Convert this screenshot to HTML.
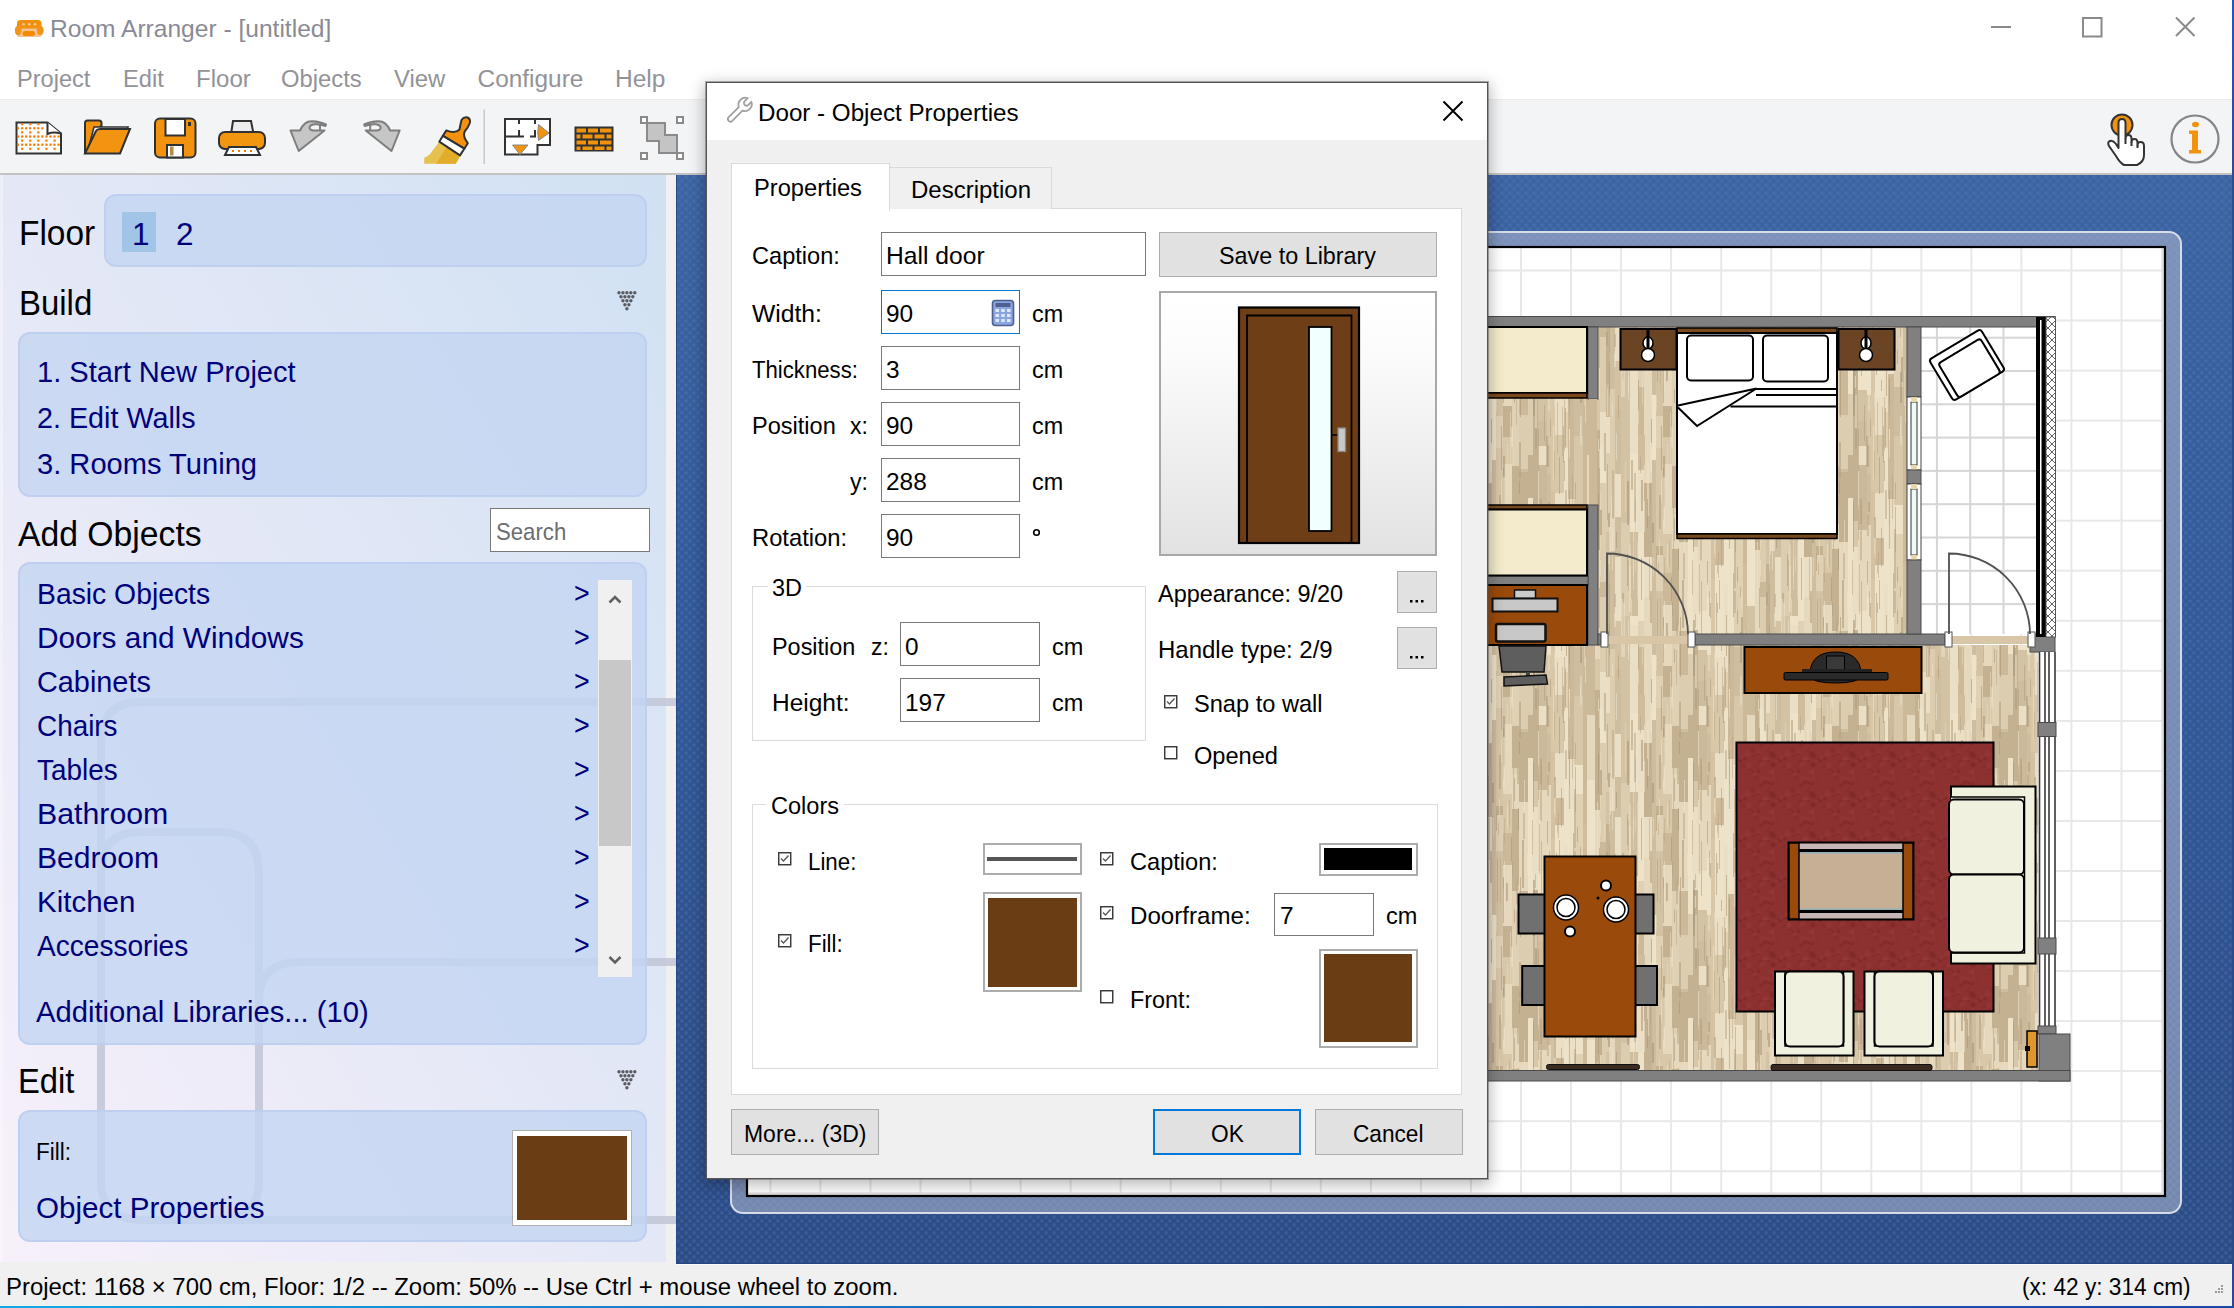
<!DOCTYPE html>
<html><head><meta charset="utf-8"><title>Room Arranger</title>
<style>
html,body{margin:0;padding:0;}
body{width:2234px;height:1308px;overflow:hidden;position:relative;background:#fff;font-family:"Liberation Sans",sans-serif;}
.t{position:absolute;white-space:nowrap;font-family:"Liberation Sans",sans-serif;}
svg{position:absolute;overflow:visible;}
</style></head><body>
<div style="position:absolute;left:0.0px;top:0.0px;width:2234.0px;height:99.0px;background:#fff"></div>
<div style="position:absolute;left:0.0px;top:99.0px;width:2234.0px;height:1.0px;background:#ececec"></div>
<div style="position:absolute;left:0.0px;top:100.0px;width:2232.0px;height:73.0px;background:#f3f4f6"></div>
<div style="position:absolute;left:0.0px;top:173.0px;width:2232.0px;height:2.0px;background:#c3c3c3"></div>
<div style="position:absolute;left:0.0px;top:1262.0px;width:2232.0px;height:44.0px;background:#f0f0f0"></div>
<div style="position:absolute;left:676.0px;top:1264.0px;width:1556.0px;height:1.0px;background:#fafafa"></div>
<div style="position:absolute;left:2232.0px;top:0.0px;width:2.0px;height:1308.0px;background:linear-gradient(#1f56c8 0%,#2c4d90 12%,#2a4a88 100%)"></div>
<div style="position:absolute;left:0.0px;top:1306.0px;width:2234.0px;height:2.0px;background:linear-gradient(90deg,#10a8ea,#1b6fc8 40%,#1848a8 100%)"></div>
<svg style="left:0;top:0" width="50" height="45" viewBox="0 0 50 45">
<rect x="17" y="26" width="24.5" height="11" rx="2" fill="#f7c28f"/>
<rect x="17" y="20" width="24.5" height="8.5" rx="3.5" fill="#f0900c"/>
<circle cx="23.5" cy="24.3" r="1.3" fill="#fcc99a"/><circle cx="29.2" cy="24.3" r="1.3" fill="#fcc99a"/><circle cx="35" cy="24.3" r="1.3" fill="#fcc99a"/>
<ellipse cx="18.2" cy="30.5" rx="3.4" ry="4.8" fill="#f29418"/>
<ellipse cx="40.3" cy="30.5" rx="3.4" ry="4.8" fill="#f29418"/>
<rect x="22.5" y="31" width="12.5" height="5" rx="2.5" fill="#f38a00"/>
</svg>
<div class="t" style="left:50.00px;top:17.00px;font-size:24.40px;line-height:24.40px;transform:scaleX(1.0072);transform-origin:0 0;color:#8a8a94;">Room Arranger - [untitled]</div>
<div class="t" style="left:16.50px;top:67.00px;font-size:24.40px;line-height:24.40px;transform:scaleX(0.9671);transform-origin:0 0;color:#929298;">Project</div>
<div class="t" style="left:123.00px;top:67.00px;font-size:24.40px;line-height:24.40px;transform:scaleX(0.9690);transform-origin:0 0;color:#929298;">Edit</div>
<div class="t" style="left:195.60px;top:67.00px;font-size:24.40px;line-height:24.40px;transform:scaleX(0.9857);transform-origin:0 0;color:#929298;">Floor</div>
<div class="t" style="left:281.00px;top:67.00px;font-size:24.40px;line-height:24.40px;transform:scaleX(0.9759);transform-origin:0 0;color:#929298;">Objects</div>
<div class="t" style="left:393.80px;top:67.00px;font-size:24.40px;line-height:24.40px;transform:scaleX(0.9792);transform-origin:0 0;color:#929298;">View</div>
<div class="t" style="left:477.60px;top:67.00px;font-size:24.40px;line-height:24.40px;color:#929298;">Configure</div>
<div class="t" style="left:615.20px;top:67.00px;font-size:24.40px;line-height:24.40px;transform:scaleX(1.0060);transform-origin:0 0;color:#929298;">Help</div>
<svg style="left:1985px;top:10px" width="220" height="34" viewBox="0 0 220 34">
<rect x="6" y="16" width="20" height="2" fill="#8a8a8a"/>
<rect x="98" y="8" width="18.5" height="18.5" fill="none" stroke="#8a8a8a" stroke-width="2"/>
<path d="M191 7.5 L209.5 26 M209.5 7.5 L191 26" stroke="#8a8a8a" stroke-width="2"/>
</svg>
<svg style="left:0;top:0" width="700" height="175" viewBox="0 0 700 175">
<path d="M16.5 122.5 H47.5 L61 133.5 V153.5 H16.5 Z" fill="#fff" stroke="#333" stroke-width="2"/>
<g fill="#f07c00"><rect x="21.1" y="123.1" width="2.2" height="2.2"/><rect x="29.2" y="123.1" width="2.2" height="2.2"/><rect x="37.3" y="123.1" width="2.2" height="2.2"/><rect x="17.0" y="127.2" width="2.2" height="2.2"/><rect x="21.1" y="127.2" width="2.2" height="2.2"/><rect x="25.1" y="127.2" width="2.2" height="2.2"/><rect x="29.1" y="127.2" width="2.2" height="2.2"/><rect x="33.2" y="127.2" width="2.2" height="2.2"/><rect x="37.2" y="127.2" width="2.2" height="2.2"/><rect x="41.3" y="127.2" width="2.2" height="2.2"/><rect x="21.1" y="131.3" width="2.2" height="2.2"/><rect x="29.2" y="131.3" width="2.2" height="2.2"/><rect x="37.3" y="131.3" width="2.2" height="2.2"/><rect x="17.0" y="135.4" width="2.2" height="2.2"/><rect x="21.1" y="135.4" width="2.2" height="2.2"/><rect x="25.1" y="135.4" width="2.2" height="2.2"/><rect x="29.1" y="135.4" width="2.2" height="2.2"/><rect x="33.2" y="135.4" width="2.2" height="2.2"/><rect x="37.2" y="135.4" width="2.2" height="2.2"/><rect x="41.3" y="135.4" width="2.2" height="2.2"/><rect x="45.4" y="135.4" width="2.2" height="2.2"/><rect x="49.4" y="135.4" width="2.2" height="2.2"/><rect x="53.4" y="135.4" width="2.2" height="2.2"/><rect x="57.5" y="135.4" width="2.2" height="2.2"/><rect x="21.1" y="139.5" width="2.2" height="2.2"/><rect x="29.2" y="139.5" width="2.2" height="2.2"/><rect x="37.3" y="139.5" width="2.2" height="2.2"/><rect x="45.4" y="139.5" width="2.2" height="2.2"/><rect x="53.5" y="139.5" width="2.2" height="2.2"/><rect x="17.0" y="143.6" width="2.2" height="2.2"/><rect x="21.1" y="143.6" width="2.2" height="2.2"/><rect x="25.1" y="143.6" width="2.2" height="2.2"/><rect x="29.1" y="143.6" width="2.2" height="2.2"/><rect x="33.2" y="143.6" width="2.2" height="2.2"/><rect x="37.2" y="143.6" width="2.2" height="2.2"/><rect x="41.3" y="143.6" width="2.2" height="2.2"/><rect x="45.4" y="143.6" width="2.2" height="2.2"/><rect x="49.4" y="143.6" width="2.2" height="2.2"/><rect x="53.4" y="143.6" width="2.2" height="2.2"/><rect x="57.5" y="143.6" width="2.2" height="2.2"/><rect x="21.1" y="147.7" width="2.2" height="2.2"/><rect x="29.2" y="147.7" width="2.2" height="2.2"/><rect x="37.3" y="147.7" width="2.2" height="2.2"/><rect x="45.4" y="147.7" width="2.2" height="2.2"/><rect x="53.5" y="147.7" width="2.2" height="2.2"/></g>
<path d="M47.5 122.5 V134 Q53 131.5 61 133.5" fill="#fff" stroke="#333" stroke-width="2"/>
<!-- folder -->
<path d="M85 153.5 V123 Q85 120.5 87.5 120.5 H99 Q101.5 120.5 101.5 123 V126 H101 L85 153.5" fill="#f2930e" stroke="#2f3133" stroke-width="2"/>
<path d="M88 150 L94 127 H128 L118 150 Z" fill="#fff" stroke="#2f3133" stroke-width="1.6"/>
<path d="M85 153.5 L96 131 Q97 129 100 129 H130 L120 153.5 Z" fill="#f29411" stroke="#2f3133" stroke-width="2"/>
<!-- save -->
<rect x="155" y="118.5" width="40.5" height="39" rx="5" fill="#f2920f" stroke="#2f3133" stroke-width="2"/>
<rect x="165.5" y="119" width="19.5" height="16.5" fill="#fff" stroke="#2f3133" stroke-width="2"/>
<rect x="188" y="122" width="3" height="4" fill="#2f3133"/>
<rect x="167" y="145" width="16" height="12.5" fill="#fff" stroke="#2f3133" stroke-width="2"/>
<rect x="170" y="146.5" width="3.5" height="9" fill="#b88845"/>
<!-- printer -->
<path d="M230 141 L233 121 H251 L255 141 Z" fill="#ececec" stroke="#2f3133" stroke-width="2"/>
<rect x="219" y="132" width="46" height="17" rx="6" fill="#f2950f" stroke="#2f3133" stroke-width="2"/>
<path d="M225 155 L229 147 H256 L260 155 Z" fill="#fff" stroke="#2f3133" stroke-width="2"/>
<g fill="#f07c00"><rect x="232" y="150" width="2" height="2"/><rect x="238" y="150" width="2" height="2"/><rect x="244" y="150" width="2" height="2"/><rect x="250" y="150" width="2" height="2"/></g>
<!-- undo -->
<g id="undo" fill="#c6c6c6" stroke="#7e7e7e" stroke-width="2" stroke-linejoin="round">
<path d="M290.5 130.5 H300 Q304 121 312 121.2 Q320 121.5 326 124.5 L325.5 126 Q320 124 314.5 124.3 Q309.3 125 309.6 128.2 Q310 130.5 313.5 130.5 H324.5 L298.7 151 Z"/>
<path d="M320 124.5 V130" fill="none"/>
</g>
<!-- redo -->
<g transform="matrix(-1 0 0 1 690.2 0)" fill="#c6c6c6" stroke="#7e7e7e" stroke-width="2" stroke-linejoin="round">
<path d="M290.5 130.5 H300 Q304 121 312 121.2 Q320 121.5 326 124.5 L325.5 126 Q320 124 314.5 124.3 Q309.3 125 309.6 128.2 Q310 130.5 313.5 130.5 H324.5 L298.7 151 Z"/>
<path d="M320 124.5 V130" fill="none"/>
</g>
<!-- brush -->
<path d="M439.3 141.7 L433 150 Q429 156.5 424.2 157.7 V163.7 H455.8 L460.5 155 Z" fill="#e6c150"/>
<path d="M447 146.5 L436 163.7 H455.8 L460.5 155 Z" fill="#e2ad2a"/>
<path d="M446.4 130.4 Q455 134 459.5 129.5 Q460.5 124 461.5 120 Q464 116.5 467.5 117.5 Q470.8 119 469.8 123 Q468.2 127.5 465 131 Q462.8 135 465.5 139.5 L467.8 143.3 L464.3 148.7 L442.9 135.8 Z" fill="#f2920f" stroke="#2f3133" stroke-width="2" stroke-linejoin="round"/>
<path d="M442.9 135.8 L464.3 148.7 L460 155.4 L439.3 141.7 Z" fill="#fff" stroke="#2f3133" stroke-width="2" stroke-linejoin="round"/>
<!-- separator -->
<rect x="483.5" y="109.5" width="1.5" height="54.5" fill="#c8c8c8"/>
<!-- floorplan -->
<path d="M505 119 H550 V145 H537.5 V154.5 H505 Z" fill="#fff" stroke="#333" stroke-width="2"/>
<path d="M505 136.5 H524 M530 136.5 H535 V130 M519 119 V124 M519 130 V136.5 M535 119 V124" fill="none" stroke="#333" stroke-width="2"/>
<path d="M538.5 124.5 L549 133 L538.5 140.5 Q537 133 538.5 124.5 Z" fill="#f2930e" stroke="#888" stroke-width="1"/>
<path d="M512.5 145 H528 L520 154.5 Z" fill="#f2930e" stroke="#888" stroke-width="1"/>
<!-- bricks -->
<rect x="574.5" y="126.5" width="39" height="25" fill="#2f3133"/>
<g fill="#f2930e">
<rect x="576.5" y="128.5" width="9.5" height="4"/><rect x="588" y="128.5" width="10" height="4"/><rect x="600" y="128.5" width="11.5" height="4"/>
<rect x="576.5" y="134.5" width="4" height="4"/><rect x="582.5" y="134.5" width="10" height="4"/><rect x="594.5" y="134.5" width="10" height="4"/><rect x="606.5" y="134.5" width="5" height="4"/>
<rect x="576.5" y="140.5" width="9.5" height="4"/><rect x="588" y="140.5" width="10" height="4"/><rect x="600" y="140.5" width="11.5" height="4"/>
<rect x="576.5" y="146.5" width="4" height="3.5"/><rect x="582.5" y="146.5" width="10" height="3.5"/><rect x="594.5" y="146.5" width="10" height="3.5"/><rect x="606.5" y="146.5" width="5" height="3.5"/>
</g>
<!-- resize -->
<path d="M647 123 H665 V135 H677 V153 H659 V141 H647 Z" fill="#c4c4c4" stroke="#8a8a8a" stroke-width="2"/>
<g fill="#fff" stroke="#8a8a8a" stroke-width="2">
<rect x="641" y="117" width="6" height="6"/><rect x="677" y="117" width="6" height="6"/>
<rect x="641" y="153" width="6" height="6"/><rect x="677" y="153" width="6" height="6"/></g>
</svg>
<svg style="left:2100px;top:108px" width="130" height="62" viewBox="0 0 130 62">
<circle cx="22" cy="17" r="10.5" fill="#f2930e" stroke="#333" stroke-width="2"/>
<path d="M18.5 40 V15 Q18.5 11 22 11 Q25.5 11 25.5 15 V30 Q25.5 27 28.5 27 Q31.5 27 31.5 31 V34 Q31.5 31 34.5 31 Q37.5 31 37.5 35 V37 Q37.5 34 40.5 34 Q44 34 44 38 V47 Q44 54 37 57 H24 Q20 55 16 48 L9 38 Q7 34 10 33 Q13 32 16 36 Z" fill="#fff" stroke="#333" stroke-width="2" stroke-linejoin="round"/>
<path d="M25.5 30 V36 M31.5 34 V38 M37.5 37 V40" stroke="#333" stroke-width="2"/>
<circle cx="95" cy="31" r="23.5" fill="none" stroke="#858585" stroke-width="2.2"/>
<ellipse cx="95.5" cy="16.5" rx="3.5" ry="2.8" fill="#f2930e"/>
<path d="M89 22.5 H98 V42 H101 V45.5 H89 V42 H92 V26 H89 Z" fill="#f2930e"/>
</svg>
<div class="t" style="left:5.50px;top:1275.00px;font-size:24.40px;line-height:24.40px;transform:scaleX(0.9802);transform-origin:0 0;color:#000;">Project: 1168 × 700 cm, Floor: 1/2 -- Zoom: 50% -- Use Ctrl + mouse wheel to zoom.</div>
<div class="t" style="left:2022.30px;top:1275.00px;font-size:24.40px;line-height:24.40px;transform:scaleX(0.9286);transform-origin:0 0;color:#000;">(x: 42 y: 314 cm)</div>
<svg style="left:2212px;top:1285px" width="14" height="14"><g fill="#9a9a9a">
<rect x="9" y="0" width="2" height="2"/><rect x="6" y="3" width="2" height="2"/><rect x="9" y="3" width="2" height="2"/>
<rect x="3" y="6" width="2" height="2"/><rect x="6" y="6" width="2" height="2"/><rect x="9" y="6" width="2" height="2"/></g></svg>
<div style="position:absolute;left:0.0px;top:175.0px;width:667.0px;height:1087.0px;background:linear-gradient(to bottom left,#d0e1f3 0%,#e4e8f6 50%,#f7f0fa 100%)"></div>
<div style="position:absolute;left:666.0px;top:175.0px;width:10.0px;height:1089.0px;background:#f0f0f0"></div>
<div style="position:absolute;left:0.0px;top:175.0px;width:3.0px;height:1087.0px;background:rgba(255,255,255,0.35)"></div>
<svg style="left:0;top:175px" width="667" height="1087" viewBox="0 175 667 1087">
<g fill="none" stroke="#c3c8d8" stroke-width="8" opacity="0.9">
<path d="M101 1180 V742 Q101 702 141 702 H700"/>
<path d="M101 1180 Q101 1220 141 1220 H700"/>
<path d="M101 872 Q101 832 141 832 H219 Q259 832 259 872 V1180 Q259 1220 219 1220"/>
<path d="M259 1180 V1002 Q259 962 299 962 H700"/>
</g></svg>
<div style="position:absolute;left:104.0px;top:194.0px;width:543.0px;height:73.0px;background:rgba(196,214,242,0.82);border:2px solid rgba(190,206,238,0.9);border-radius:12px;box-sizing:border-box;"></div>
<div style="position:absolute;left:18.0px;top:332.0px;width:629.0px;height:165.0px;background:rgba(196,214,242,0.82);border:2px solid rgba(190,206,238,0.9);border-radius:12px;box-sizing:border-box;"></div>
<div style="position:absolute;left:18.0px;top:562.0px;width:629.0px;height:483.0px;background:rgba(196,214,242,0.82);border:2px solid rgba(190,206,238,0.9);border-radius:12px;box-sizing:border-box;"></div>
<div style="position:absolute;left:18.0px;top:1110.0px;width:629.0px;height:132.0px;background:rgba(196,214,242,0.82);border:2px solid rgba(190,206,238,0.9);border-radius:12px;box-sizing:border-box;"></div>
<div class="t" style="left:19.00px;top:215.00px;font-size:35.20px;line-height:35.20px;transform:scaleX(0.9500);transform-origin:0 0;color:#000;">Floor</div>
<div style="position:absolute;left:122.0px;top:212.0px;width:34.0px;height:40.0px;background:#a2c4e6"></div>
<div class="t" style="left:132.00px;top:219.00px;font-size:31.50px;line-height:31.50px;color:#00007a;">1</div>
<div class="t" style="left:176.00px;top:219.00px;font-size:31.50px;line-height:31.50px;color:#00007a;">2</div>
<div class="t" style="left:19.00px;top:285.00px;font-size:35.20px;line-height:35.20px;transform:scaleX(0.9359);transform-origin:0 0;color:#000;">Build</div>
<svg style="left:617px;top:290px" width="20" height="20" viewBox="0 0 20 20"><g fill="#5a5c62"><circle cx="2.00" cy="2.80" r="1.7"/><circle cx="5.95" cy="2.80" r="1.7"/><circle cx="9.90" cy="2.80" r="1.7"/><circle cx="13.85" cy="2.80" r="1.7"/><circle cx="17.80" cy="2.80" r="1.7"/><circle cx="3.98" cy="6.78" r="1.7"/><circle cx="7.93" cy="6.78" r="1.7"/><circle cx="11.88" cy="6.78" r="1.7"/><circle cx="15.83" cy="6.78" r="1.7"/><circle cx="5.95" cy="10.76" r="1.7"/><circle cx="9.90" cy="10.76" r="1.7"/><circle cx="13.85" cy="10.76" r="1.7"/><circle cx="7.93" cy="14.74" r="1.7"/><circle cx="11.88" cy="14.74" r="1.7"/><circle cx="9.90" cy="18.72" r="1.7"/></g></svg>
<svg style="left:617px;top:1069px" width="20" height="20" viewBox="0 0 20 20"><g fill="#5a5c62"><circle cx="2.00" cy="2.80" r="1.7"/><circle cx="5.95" cy="2.80" r="1.7"/><circle cx="9.90" cy="2.80" r="1.7"/><circle cx="13.85" cy="2.80" r="1.7"/><circle cx="17.80" cy="2.80" r="1.7"/><circle cx="3.98" cy="6.78" r="1.7"/><circle cx="7.93" cy="6.78" r="1.7"/><circle cx="11.88" cy="6.78" r="1.7"/><circle cx="15.83" cy="6.78" r="1.7"/><circle cx="5.95" cy="10.76" r="1.7"/><circle cx="9.90" cy="10.76" r="1.7"/><circle cx="13.85" cy="10.76" r="1.7"/><circle cx="7.93" cy="14.74" r="1.7"/><circle cx="11.88" cy="14.74" r="1.7"/><circle cx="9.90" cy="18.72" r="1.7"/></g></svg>
<div class="t" style="left:36.50px;top:357.00px;font-size:29.60px;line-height:29.60px;transform:scaleX(0.9830);transform-origin:0 0;color:#00007a;">1. Start New Project</div>
<div class="t" style="left:36.50px;top:403.00px;font-size:29.60px;line-height:29.60px;transform:scaleX(0.9706);transform-origin:0 0;color:#00007a;">2. Edit Walls</div>
<div class="t" style="left:36.50px;top:449.00px;font-size:29.60px;line-height:29.60px;transform:scaleX(0.9835);transform-origin:0 0;color:#00007a;">3. Rooms Tuning</div>
<div class="t" style="left:18.00px;top:516.00px;font-size:35.20px;line-height:35.20px;transform:scaleX(0.9583);transform-origin:0 0;color:#000;">Add Objects</div>
<div style="position:absolute;left:490.0px;top:508.0px;width:160.0px;height:44.0px;background:#fff;border:1px solid #7a7a7a;box-sizing:border-box"></div>
<div class="t" style="left:496.00px;top:520.00px;font-size:24.40px;line-height:24.40px;transform:scaleX(0.9091);transform-origin:0 0;color:#6d6d6d;">Search</div>
<div class="t" style="left:36.50px;top:579.00px;font-size:29.60px;line-height:29.60px;transform:scaleX(0.9569);transform-origin:0 0;color:#00007a;">Basic Objects</div>
<div class="t" style="left:574.00px;top:578.00px;font-size:29.60px;line-height:29.60px;transform:scaleX(0.9059);transform-origin:0 0;color:#00007a;">&gt;</div>
<div class="t" style="left:36.50px;top:623.00px;font-size:29.60px;line-height:29.60px;transform:scaleX(1.0075);transform-origin:0 0;color:#00007a;">Doors and Windows</div>
<div class="t" style="left:574.00px;top:622.00px;font-size:29.60px;line-height:29.60px;transform:scaleX(0.9059);transform-origin:0 0;color:#00007a;">&gt;</div>
<div class="t" style="left:36.50px;top:667.00px;font-size:29.60px;line-height:29.60px;transform:scaleX(0.9744);transform-origin:0 0;color:#00007a;">Cabinets</div>
<div class="t" style="left:574.00px;top:666.00px;font-size:29.60px;line-height:29.60px;transform:scaleX(0.9059);transform-origin:0 0;color:#00007a;">&gt;</div>
<div class="t" style="left:36.50px;top:711.00px;font-size:29.60px;line-height:29.60px;transform:scaleX(0.9419);transform-origin:0 0;color:#00007a;">Chairs</div>
<div class="t" style="left:574.00px;top:710.00px;font-size:29.60px;line-height:29.60px;transform:scaleX(0.9059);transform-origin:0 0;color:#00007a;">&gt;</div>
<div class="t" style="left:36.50px;top:755.00px;font-size:29.60px;line-height:29.60px;transform:scaleX(0.9419);transform-origin:0 0;color:#00007a;">Tables</div>
<div class="t" style="left:574.00px;top:754.00px;font-size:29.60px;line-height:29.60px;transform:scaleX(0.9059);transform-origin:0 0;color:#00007a;">&gt;</div>
<div class="t" style="left:36.50px;top:799.00px;font-size:29.60px;line-height:29.60px;transform:scaleX(1.0234);transform-origin:0 0;color:#00007a;">Bathroom</div>
<div class="t" style="left:574.00px;top:798.00px;font-size:29.60px;line-height:29.60px;transform:scaleX(0.9059);transform-origin:0 0;color:#00007a;">&gt;</div>
<div class="t" style="left:36.50px;top:843.00px;font-size:29.60px;line-height:29.60px;transform:scaleX(1.0167);transform-origin:0 0;color:#00007a;">Bedroom</div>
<div class="t" style="left:574.00px;top:842.00px;font-size:29.60px;line-height:29.60px;transform:scaleX(0.9059);transform-origin:0 0;color:#00007a;">&gt;</div>
<div class="t" style="left:36.50px;top:887.00px;font-size:29.60px;line-height:29.60px;transform:scaleX(0.9960);transform-origin:0 0;color:#00007a;">Kitchen</div>
<div class="t" style="left:574.00px;top:886.00px;font-size:29.60px;line-height:29.60px;transform:scaleX(0.9059);transform-origin:0 0;color:#00007a;">&gt;</div>
<div class="t" style="left:36.50px;top:931.00px;font-size:29.60px;line-height:29.60px;transform:scaleX(0.9481);transform-origin:0 0;color:#00007a;">Accessories</div>
<div class="t" style="left:574.00px;top:930.00px;font-size:29.60px;line-height:29.60px;transform:scaleX(0.9059);transform-origin:0 0;color:#00007a;">&gt;</div>
<div style="position:absolute;left:598.0px;top:580.0px;width:34.0px;height:397.0px;background:#f0f0f0"></div>
<div style="position:absolute;left:599.0px;top:660.0px;width:32.0px;height:186.0px;background:#c8c8c8"></div>
<svg style="left:598px;top:580px" width="34" height="397" viewBox="0 0 34 397">
<path d="M11.5 22.5 L17 17 L22.5 22.5" fill="none" stroke="#606060" stroke-width="2.5"/>
<path d="M11.5 377 L17 382.5 L22.5 377" fill="none" stroke="#606060" stroke-width="2.5"/>
</svg>
<div class="t" style="left:36.00px;top:997.00px;font-size:29.60px;line-height:29.60px;transform:scaleX(0.9864);transform-origin:0 0;color:#00007a;">Additional Libraries... (10)</div>
<div class="t" style="left:18.30px;top:1063.00px;font-size:35.20px;line-height:35.20px;transform:scaleX(0.9295);transform-origin:0 0;color:#000;">Edit</div>
<div class="t" style="left:36.00px;top:1140.00px;font-size:24.40px;line-height:24.40px;transform:scaleX(0.9211);transform-origin:0 0;color:#000;">Fill:</div>
<div class="t" style="left:36.00px;top:1193.00px;font-size:29.60px;line-height:29.60px;color:#00007a;">Object Properties</div>
<div style="position:absolute;left:512.0px;top:1130.0px;width:120.0px;height:96.0px;background:#fff;border:1px solid #b0b0b0;box-sizing:border-box"></div>
<div style="position:absolute;left:517.0px;top:1136.0px;width:110.0px;height:84.0px;background:#6b3d15"></div>
<div style="position:absolute;left:676.0px;top:175.0px;width:1556.0px;height:1089.0px;background-color:#30558f;background-image:radial-gradient(circle at 2px 2px, rgba(100,140,200,0.32) 0, rgba(100,140,200,0.14) 2px, transparent 3px),radial-gradient(circle at 6px 6px, rgba(100,140,200,0.32) 0, rgba(100,140,200,0.14) 2px, transparent 3px),linear-gradient(#3b63a1 0%,#33599a 35%,#2a4b84 100%);background-size:8px 8px,8px 8px,100% 100%;background-position:0 0"></div>
<div style="position:absolute;left:676.0px;top:1263.0px;width:1556.0px;height:1.0px;background:#24457f"></div>
<div style="position:absolute;left:676.0px;top:175.0px;width:1.0px;height:1089.0px;background:#26488a"></div>
<div style="position:absolute;left:730.0px;top:230.5px;width:1451.5px;height:983.5px;background:rgba(178,186,208,0.55);border:2px solid #d5dce8;border-radius:13px;box-sizing:border-box"></div>
<svg style="left:0;top:0" width="2234" height="1308" viewBox="0 0 2234 1308">
<rect x="746" y="246" width="1420" height="951" fill="#fff"/>
<g fill="#e8e8e8"><rect x="769.4" y="247" width="2" height="949"/><rect x="819.4" y="247" width="2" height="949"/><rect x="869.5" y="247" width="2" height="949"/><rect x="919.5" y="247" width="2" height="949"/><rect x="969.6" y="247" width="2" height="949"/><rect x="1019.6" y="247" width="2" height="949"/><rect x="1069.6" y="247" width="2" height="949"/><rect x="1119.7" y="247" width="2" height="949"/><rect x="1169.7" y="247" width="2" height="949"/><rect x="1219.8" y="247" width="2" height="949"/><rect x="1269.8" y="247" width="2" height="949"/><rect x="1319.8" y="247" width="2" height="949"/><rect x="1369.9" y="247" width="2" height="949"/><rect x="1419.9" y="247" width="2" height="949"/><rect x="1470.0" y="247" width="2" height="949"/><rect x="1520.0" y="247" width="2" height="949"/><rect x="1570.0" y="247" width="2" height="949"/><rect x="1620.1" y="247" width="2" height="949"/><rect x="1670.1" y="247" width="2" height="949"/><rect x="1720.2" y="247" width="2" height="949"/><rect x="1770.2" y="247" width="2" height="949"/><rect x="1820.2" y="247" width="2" height="949"/><rect x="1870.3" y="247" width="2" height="949"/><rect x="1920.3" y="247" width="2" height="949"/><rect x="1970.4" y="247" width="2" height="949"/><rect x="2020.4" y="247" width="2" height="949"/><rect x="2070.4" y="247" width="2" height="949"/><rect x="2120.5" y="247" width="2" height="949"/><rect x="747" y="269.5" width="1418" height="2"/><rect x="747" y="319.5" width="1418" height="2"/><rect x="747" y="369.6" width="1418" height="2"/><rect x="747" y="419.6" width="1418" height="2"/><rect x="747" y="469.7" width="1418" height="2"/><rect x="747" y="519.7" width="1418" height="2"/><rect x="747" y="569.7" width="1418" height="2"/><rect x="747" y="619.8" width="1418" height="2"/><rect x="747" y="669.8" width="1418" height="2"/><rect x="747" y="719.9" width="1418" height="2"/><rect x="747" y="769.9" width="1418" height="2"/><rect x="747" y="819.9" width="1418" height="2"/><rect x="747" y="870.0" width="1418" height="2"/><rect x="747" y="920.0" width="1418" height="2"/><rect x="747" y="970.1" width="1418" height="2"/><rect x="747" y="1020.1" width="1418" height="2"/><rect x="747" y="1070.1" width="1418" height="2"/><rect x="747" y="1120.2" width="1418" height="2"/><rect x="747" y="1170.2" width="1418" height="2"/></g>
<rect x="2161.5" y="248" width="3" height="947" fill="#dcdcdc"/><rect x="748" y="1192.5" width="1416" height="3" fill="#dcdcdc"/>
<rect x="747" y="247" width="1418" height="949" fill="none" stroke="#000" stroke-width="2.2"/>
<defs><pattern id="wood" patternUnits="userSpaceOnUse" x="0" y="0" width="160" height="260"><rect width="160" height="260" fill="#d9c9ab"/><rect x="0" y="77" width="6" height="75" fill="#ddcdb0"/><rect x="0" y="152" width="6" height="34" fill="#eadec4"/><rect x="0" y="186" width="6" height="37" fill="#eee2c9"/><rect x="0" y="223" width="6" height="37" fill="#ddcdb0"/><rect x="0" y="0" width="6" height="62" fill="#ddcdb0"/><rect x="0" y="62" width="6" height="15" fill="#cbb99a"/><rect x="6" y="44" width="4" height="80" fill="#c4b192"/><rect x="6" y="124" width="4" height="33" fill="#cbb99a"/><rect x="6" y="157" width="4" height="36" fill="#eadec4"/><rect x="6" y="193" width="4" height="67" fill="#ddcdb0"/><rect x="6" y="0" width="4" height="12" fill="#ddcdb0"/><rect x="6" y="12" width="4" height="32" fill="#d3c2a4"/><rect x="10" y="31" width="5" height="98" fill="#cfbd9f"/><rect x="10" y="129" width="5" height="75" fill="#ddcdb0"/><rect x="10" y="204" width="5" height="53" fill="#ddcdb0"/><rect x="10" y="257" width="5" height="3" fill="#e6d8bd"/><rect x="10" y="0" width="5" height="31" fill="#e6d8bd"/><rect x="15" y="214" width="6" height="43" fill="#eadec4"/><rect x="15" y="257" width="6" height="3" fill="#cfbd9f"/><rect x="15" y="0" width="6" height="37" fill="#cfbd9f"/><rect x="15" y="37" width="6" height="64" fill="#eadec4"/><rect x="15" y="101" width="6" height="48" fill="#d3c2a4"/><rect x="15" y="149" width="6" height="65" fill="#cfbd9f"/><rect x="21" y="96" width="9" height="72" fill="#d3c2a4"/><rect x="21" y="168" width="9" height="92" fill="#d3c2a4"/><rect x="21" y="0" width="9" height="3" fill="#d3c2a4"/><rect x="21" y="3" width="9" height="93" fill="#ddcdb0"/><rect x="30" y="105" width="8" height="88" fill="#eadec4"/><rect x="30" y="193" width="8" height="67" fill="#eee2c9"/><rect x="30" y="0" width="8" height="12" fill="#eee2c9"/><rect x="30" y="12" width="8" height="84" fill="#cfbd9f"/><rect x="30" y="96" width="8" height="9" fill="#eee2c9"/><rect x="38" y="127" width="6" height="48" fill="#cbb99a"/><rect x="38" y="175" width="6" height="35" fill="#cfbd9f"/><rect x="38" y="210" width="6" height="50" fill="#eadec4"/><rect x="38" y="0" width="6" height="13" fill="#eadec4"/><rect x="38" y="13" width="6" height="88" fill="#eee2c9"/><rect x="38" y="101" width="6" height="26" fill="#e0d1b5"/><rect x="44" y="37" width="8" height="40" fill="#eadec4"/><rect x="44" y="77" width="8" height="78" fill="#e6d8bd"/><rect x="44" y="155" width="8" height="68" fill="#e6d8bd"/><rect x="44" y="223" width="8" height="37" fill="#c4b192"/><rect x="44" y="0" width="8" height="37" fill="#c4b192"/><rect x="52" y="39" width="4" height="96" fill="#cfbd9f"/><rect x="52" y="135" width="4" height="65" fill="#eee2c9"/><rect x="52" y="200" width="4" height="60" fill="#cfbd9f"/><rect x="52" y="0" width="4" height="9" fill="#cfbd9f"/><rect x="52" y="9" width="4" height="30" fill="#cfbd9f"/><rect x="56" y="35" width="7" height="36" fill="#e0d1b5"/><rect x="56" y="71" width="7" height="85" fill="#d3c2a4"/><rect x="56" y="156" width="7" height="32" fill="#e0d1b5"/><rect x="56" y="188" width="7" height="72" fill="#d8c7a9"/><rect x="56" y="0" width="7" height="26" fill="#d8c7a9"/><rect x="56" y="26" width="7" height="9" fill="#c4b192"/><rect x="63" y="177" width="9" height="27" fill="#d8c7a9"/><rect x="63" y="204" width="9" height="56" fill="#e6d8bd"/><rect x="63" y="0" width="9" height="14" fill="#e6d8bd"/><rect x="63" y="14" width="9" height="39" fill="#d8c7a9"/><rect x="63" y="53" width="9" height="32" fill="#cbb99a"/><rect x="63" y="85" width="9" height="61" fill="#e6d8bd"/><rect x="63" y="146" width="9" height="31" fill="#c4b192"/><rect x="72" y="254" width="7" height="6" fill="#e6d8bd"/><rect x="72" y="0" width="7" height="29" fill="#e6d8bd"/><rect x="72" y="29" width="7" height="82" fill="#c4b192"/><rect x="72" y="111" width="7" height="95" fill="#e0d1b5"/><rect x="72" y="206" width="7" height="42" fill="#c4b192"/><rect x="72" y="248" width="7" height="6" fill="#e0d1b5"/><rect x="79" y="212" width="9" height="48" fill="#c4b192"/><rect x="79" y="0" width="9" height="22" fill="#c4b192"/><rect x="79" y="22" width="9" height="54" fill="#e6d8bd"/><rect x="79" y="76" width="9" height="35" fill="#e6d8bd"/><rect x="79" y="111" width="9" height="44" fill="#cbb99a"/><rect x="79" y="155" width="9" height="54" fill="#ddcdb0"/><rect x="79" y="209" width="9" height="3" fill="#cfbd9f"/><rect x="88" y="134" width="5" height="61" fill="#ddcdb0"/><rect x="88" y="195" width="5" height="43" fill="#c4b192"/><rect x="88" y="238" width="5" height="22" fill="#eee2c9"/><rect x="88" y="0" width="5" height="71" fill="#eee2c9"/><rect x="88" y="71" width="5" height="63" fill="#eee2c9"/><rect x="93" y="27" width="5" height="83" fill="#eadec4"/><rect x="93" y="110" width="5" height="75" fill="#c4b192"/><rect x="93" y="185" width="5" height="75" fill="#c4b192"/><rect x="93" y="0" width="5" height="1" fill="#c4b192"/><rect x="93" y="1" width="5" height="26" fill="#d8c7a9"/><rect x="98" y="205" width="9" height="32" fill="#cbb99a"/><rect x="98" y="237" width="9" height="23" fill="#cbb99a"/><rect x="98" y="0" width="9" height="10" fill="#cbb99a"/><rect x="98" y="10" width="9" height="81" fill="#e6d8bd"/><rect x="98" y="91" width="9" height="39" fill="#eee2c9"/><rect x="98" y="130" width="9" height="31" fill="#d3c2a4"/><rect x="98" y="161" width="9" height="25" fill="#cfbd9f"/><rect x="98" y="186" width="9" height="19" fill="#eadec4"/><rect x="107" y="186" width="4" height="28" fill="#d3c2a4"/><rect x="107" y="214" width="4" height="46" fill="#cfbd9f"/><rect x="107" y="0" width="4" height="5" fill="#cfbd9f"/><rect x="107" y="5" width="4" height="73" fill="#e6d8bd"/><rect x="107" y="78" width="4" height="57" fill="#eee2c9"/><rect x="107" y="135" width="4" height="51" fill="#d8c7a9"/><rect x="111" y="59" width="4" height="87" fill="#d8c7a9"/><rect x="111" y="146" width="4" height="86" fill="#d8c7a9"/><rect x="111" y="232" width="4" height="28" fill="#d3c2a4"/><rect x="111" y="0" width="4" height="36" fill="#d3c2a4"/><rect x="111" y="36" width="4" height="23" fill="#d3c2a4"/><rect x="115" y="175" width="9" height="58" fill="#d8c7a9"/><rect x="115" y="233" width="9" height="27" fill="#eadec4"/><rect x="115" y="0" width="9" height="18" fill="#eadec4"/><rect x="115" y="18" width="9" height="27" fill="#cbb99a"/><rect x="115" y="45" width="9" height="92" fill="#eee2c9"/><rect x="115" y="137" width="9" height="38" fill="#eadec4"/><rect x="124" y="152" width="4" height="36" fill="#e0d1b5"/><rect x="124" y="188" width="4" height="72" fill="#eee2c9"/><rect x="124" y="0" width="4" height="19" fill="#eee2c9"/><rect x="124" y="19" width="4" height="46" fill="#eee2c9"/><rect x="124" y="65" width="4" height="53" fill="#eadec4"/><rect x="124" y="118" width="4" height="34" fill="#eadec4"/><rect x="128" y="114" width="6" height="49" fill="#cbb99a"/><rect x="128" y="163" width="6" height="76" fill="#cbb99a"/><rect x="128" y="239" width="6" height="21" fill="#eadec4"/><rect x="128" y="0" width="6" height="29" fill="#eadec4"/><rect x="128" y="29" width="6" height="85" fill="#eee2c9"/><rect x="134" y="14" width="9" height="28" fill="#e0d1b5"/><rect x="134" y="42" width="9" height="85" fill="#e0d1b5"/><rect x="134" y="127" width="9" height="49" fill="#cfbd9f"/><rect x="134" y="176" width="9" height="69" fill="#d8c7a9"/><rect x="134" y="245" width="9" height="15" fill="#eee2c9"/><rect x="134" y="0" width="9" height="14" fill="#eee2c9"/><rect x="143" y="112" width="4" height="38" fill="#cbb99a"/><rect x="143" y="150" width="4" height="85" fill="#cbb99a"/><rect x="143" y="235" width="4" height="25" fill="#cbb99a"/><rect x="143" y="0" width="4" height="43" fill="#cbb99a"/><rect x="143" y="43" width="4" height="69" fill="#cfbd9f"/><rect x="147" y="0" width="8" height="86" fill="#eee2c9"/><rect x="147" y="86" width="8" height="35" fill="#d3c2a4"/><rect x="147" y="121" width="8" height="74" fill="#cbb99a"/><rect x="147" y="195" width="8" height="65" fill="#e6d8bd"/><rect x="155" y="170" width="5" height="36" fill="#c4b192"/><rect x="155" y="206" width="5" height="54" fill="#c4b192"/><rect x="155" y="0" width="5" height="30" fill="#c4b192"/><rect x="155" y="30" width="5" height="35" fill="#e6d8bd"/><rect x="155" y="65" width="5" height="46" fill="#e6d8bd"/><rect x="155" y="111" width="5" height="28" fill="#e6d8bd"/><rect x="155" y="139" width="5" height="31" fill="#d8c7a9"/><rect x="37" y="242" width="1" height="19" fill="#e9dcc1" opacity="0.55"/><rect x="37" y="-18" width="1" height="19" fill="#e9dcc1" opacity="0.55"/><rect x="140" y="67" width="1" height="10" fill="#b09c7c" opacity="0.55"/><rect x="134" y="71" width="2" height="22" fill="#bca888" opacity="0.55"/><rect x="7" y="128" width="1" height="28" fill="#e9dcc1" opacity="0.55"/><rect x="61" y="166" width="1" height="44" fill="#a89474" opacity="0.55"/><rect x="33" y="31" width="1" height="39" fill="#e9dcc1" opacity="0.55"/><rect x="132" y="215" width="1" height="44" fill="#bca888" opacity="0.55"/><rect x="134" y="9" width="2" height="59" fill="#bca888" opacity="0.55"/><rect x="155" y="2" width="1" height="21" fill="#bca888" opacity="0.55"/><rect x="121" y="61" width="1" height="30" fill="#e9dcc1" opacity="0.55"/><rect x="135" y="247" width="1" height="45" fill="#b09c7c" opacity="0.55"/><rect x="135" y="-13" width="1" height="45" fill="#b09c7c" opacity="0.55"/><rect x="63" y="97" width="1" height="12" fill="#b09c7c" opacity="0.55"/><rect x="129" y="231" width="1" height="58" fill="#b09c7c" opacity="0.55"/><rect x="129" y="-29" width="1" height="58" fill="#b09c7c" opacity="0.55"/><rect x="113" y="166" width="1" height="54" fill="#efe3ca" opacity="0.55"/><rect x="115" y="244" width="1" height="54" fill="#e9dcc1" opacity="0.55"/><rect x="115" y="-16" width="1" height="54" fill="#e9dcc1" opacity="0.55"/><rect x="66" y="103" width="2" height="18" fill="#a89474" opacity="0.55"/><rect x="31" y="200" width="2" height="30" fill="#b09c7c" opacity="0.55"/><rect x="61" y="219" width="1" height="23" fill="#efe3ca" opacity="0.55"/><rect x="31" y="79" width="1" height="19" fill="#efe3ca" opacity="0.55"/><rect x="35" y="239" width="1" height="57" fill="#b09c7c" opacity="0.55"/><rect x="35" y="-21" width="1" height="57" fill="#b09c7c" opacity="0.55"/><rect x="101" y="249" width="1" height="52" fill="#bca888" opacity="0.55"/><rect x="101" y="-11" width="1" height="52" fill="#bca888" opacity="0.55"/><rect x="41" y="220" width="2" height="31" fill="#a89474" opacity="0.55"/><rect x="50" y="182" width="1" height="15" fill="#efe3ca" opacity="0.55"/><rect x="4" y="173" width="2" height="38" fill="#b09c7c" opacity="0.55"/><rect x="98" y="169" width="1" height="42" fill="#b09c7c" opacity="0.55"/><rect x="28" y="117" width="1" height="15" fill="#efe3ca" opacity="0.55"/><rect x="69" y="20" width="1" height="27" fill="#bca888" opacity="0.55"/><rect x="108" y="132" width="2" height="19" fill="#e9dcc1" opacity="0.55"/><rect x="131" y="253" width="1" height="15" fill="#efe3ca" opacity="0.55"/><rect x="131" y="-7" width="1" height="15" fill="#efe3ca" opacity="0.55"/><rect x="14" y="93" width="2" height="14" fill="#efe3ca" opacity="0.55"/><rect x="4" y="45" width="1" height="15" fill="#e9dcc1" opacity="0.55"/><rect x="56" y="34" width="1" height="17" fill="#a89474" opacity="0.55"/><rect x="2" y="173" width="2" height="27" fill="#e9dcc1" opacity="0.55"/><rect x="33" y="22" width="1" height="17" fill="#bca888" opacity="0.55"/><rect x="67" y="25" width="1" height="22" fill="#efe3ca" opacity="0.55"/><rect x="78" y="105" width="1" height="38" fill="#e9dcc1" opacity="0.55"/><rect x="45" y="138" width="1" height="11" fill="#efe3ca" opacity="0.55"/><rect x="9" y="7" width="1" height="56" fill="#e9dcc1" opacity="0.55"/><rect x="141" y="97" width="2" height="25" fill="#a89474" opacity="0.55"/><rect x="27" y="221" width="2" height="44" fill="#a89474" opacity="0.55"/><rect x="27" y="-39" width="2" height="44" fill="#a89474" opacity="0.55"/><rect x="129" y="157" width="1" height="24" fill="#efe3ca" opacity="0.55"/><rect x="50" y="71" width="2" height="32" fill="#b09c7c" opacity="0.55"/><rect x="33" y="7" width="1" height="50" fill="#efe3ca" opacity="0.55"/><rect x="110" y="83" width="1" height="15" fill="#a89474" opacity="0.55"/><rect x="129" y="144" width="1" height="54" fill="#efe3ca" opacity="0.55"/><rect x="11" y="235" width="1" height="20" fill="#efe3ca" opacity="0.55"/><rect x="114" y="1" width="1" height="33" fill="#efe3ca" opacity="0.55"/><rect x="140" y="165" width="1" height="12" fill="#efe3ca" opacity="0.55"/><rect x="55" y="182" width="1" height="10" fill="#efe3ca" opacity="0.55"/><rect x="97" y="42" width="2" height="27" fill="#e9dcc1" opacity="0.55"/><rect x="51" y="127" width="1" height="15" fill="#efe3ca" opacity="0.55"/><rect x="22" y="73" width="2" height="47" fill="#b09c7c" opacity="0.55"/><rect x="100" y="11" width="1" height="29" fill="#bca888" opacity="0.55"/><rect x="21" y="79" width="2" height="58" fill="#efe3ca" opacity="0.55"/><rect x="126" y="76" width="1" height="56" fill="#e9dcc1" opacity="0.55"/><rect x="37" y="22" width="2" height="56" fill="#e9dcc1" opacity="0.55"/><rect x="35" y="258" width="1" height="53" fill="#e9dcc1" opacity="0.55"/><rect x="35" y="-2" width="1" height="53" fill="#e9dcc1" opacity="0.55"/><rect x="58" y="43" width="1" height="12" fill="#bca888" opacity="0.55"/><rect x="92" y="53" width="2" height="38" fill="#e9dcc1" opacity="0.55"/><rect x="12" y="9" width="1" height="41" fill="#efe3ca" opacity="0.55"/><rect x="0" y="233" width="1" height="57" fill="#e9dcc1" opacity="0.55"/><rect x="0" y="-27" width="1" height="57" fill="#e9dcc1" opacity="0.55"/><rect x="137" y="47" width="1" height="57" fill="#a89474" opacity="0.55"/><rect x="64" y="38" width="1" height="25" fill="#bca888" opacity="0.55"/><rect x="59" y="235" width="2" height="34" fill="#b09c7c" opacity="0.55"/><rect x="59" y="-25" width="2" height="34" fill="#b09c7c" opacity="0.55"/><rect x="122" y="147" width="1" height="49" fill="#bca888" opacity="0.55"/><rect x="19" y="75" width="1" height="26" fill="#efe3ca" opacity="0.55"/><rect x="159" y="68" width="1" height="40" fill="#b09c7c" opacity="0.55"/><rect x="124" y="137" width="1" height="54" fill="#bca888" opacity="0.55"/><rect x="125" y="148" width="1" height="39" fill="#a89474" opacity="0.55"/><rect x="119" y="60" width="1" height="29" fill="#b09c7c" opacity="0.55"/><rect x="121" y="8" width="1" height="39" fill="#b09c7c" opacity="0.55"/><rect x="129" y="230" width="1" height="34" fill="#bca888" opacity="0.55"/><rect x="129" y="-30" width="1" height="34" fill="#bca888" opacity="0.55"/><rect x="53" y="38" width="1" height="19" fill="#e9dcc1" opacity="0.55"/><rect x="67" y="184" width="1" height="48" fill="#e9dcc1" opacity="0.55"/><rect x="71" y="57" width="1" height="24" fill="#a89474" opacity="0.55"/><rect x="124" y="201" width="1" height="20" fill="#b09c7c" opacity="0.55"/><rect x="125" y="230" width="2" height="29" fill="#bca888" opacity="0.55"/><rect x="106" y="176" width="2" height="30" fill="#b09c7c" opacity="0.55"/><rect x="84" y="0" width="1" height="58" fill="#efe3ca" opacity="0.55"/><rect x="101" y="61" width="1" height="55" fill="#b09c7c" opacity="0.55"/><rect x="74" y="129" width="1" height="14" fill="#a89474" opacity="0.55"/><rect x="99" y="39" width="1" height="37" fill="#efe3ca" opacity="0.55"/><rect x="12" y="143" width="1" height="13" fill="#efe3ca" opacity="0.55"/><rect x="38" y="127" width="1" height="37" fill="#e9dcc1" opacity="0.55"/><rect x="80" y="97" width="1" height="60" fill="#a89474" opacity="0.55"/><rect x="7" y="204" width="1" height="56" fill="#b09c7c" opacity="0.55"/><rect x="12" y="210" width="2" height="49" fill="#bca888" opacity="0.55"/><rect x="73" y="248" width="1" height="45" fill="#bca888" opacity="0.55"/><rect x="73" y="-12" width="1" height="45" fill="#bca888" opacity="0.55"/><rect x="43" y="241" width="2" height="31" fill="#efe3ca" opacity="0.55"/><rect x="43" y="-19" width="2" height="31" fill="#efe3ca" opacity="0.55"/><rect x="76" y="130" width="1" height="35" fill="#bca888" opacity="0.55"/><rect x="77" y="247" width="2" height="17" fill="#bca888" opacity="0.55"/><rect x="77" y="-13" width="2" height="17" fill="#bca888" opacity="0.55"/><rect x="41" y="38" width="1" height="42" fill="#a89474" opacity="0.55"/><rect x="140" y="112" width="2" height="31" fill="#a89474" opacity="0.55"/><rect x="109" y="71" width="1" height="25" fill="#b09c7c" opacity="0.55"/><rect x="44" y="175" width="1" height="30" fill="#bca888" opacity="0.55"/><rect x="94" y="132" width="1" height="11" fill="#a89474" opacity="0.55"/><rect x="98" y="211" width="1" height="34" fill="#efe3ca" opacity="0.55"/><rect x="86" y="31" width="2" height="27" fill="#e9dcc1" opacity="0.55"/><rect x="92" y="64" width="1" height="15" fill="#efe3ca" opacity="0.55"/><rect x="63" y="196" width="2" height="51" fill="#a89474" opacity="0.55"/><rect x="110" y="159" width="1" height="18" fill="#b09c7c" opacity="0.55"/><rect x="108" y="242" width="2" height="10" fill="#b09c7c" opacity="0.55"/><rect x="100" y="239" width="2" height="25" fill="#b09c7c" opacity="0.55"/><rect x="100" y="-21" width="2" height="25" fill="#b09c7c" opacity="0.55"/><rect x="57" y="79" width="1" height="43" fill="#b09c7c" opacity="0.55"/><rect x="117" y="43" width="1" height="10" fill="#bca888" opacity="0.55"/><rect x="59" y="19" width="1" height="18" fill="#efe3ca" opacity="0.55"/><rect x="135" y="223" width="1" height="16" fill="#b09c7c" opacity="0.55"/><rect x="76" y="98" width="2" height="26" fill="#bca888" opacity="0.55"/><rect x="153" y="0" width="1" height="44" fill="#efe3ca" opacity="0.55"/><rect x="117" y="142" width="1" height="51" fill="#bca888" opacity="0.55"/><rect x="121" y="120" width="1" height="11" fill="#a89474" opacity="0.55"/><rect x="78" y="28" width="1" height="22" fill="#a89474" opacity="0.55"/><rect x="107" y="41" width="1" height="24" fill="#a89474" opacity="0.55"/><rect x="94" y="116" width="2" height="12" fill="#efe3ca" opacity="0.55"/><rect x="107" y="185" width="2" height="22" fill="#b09c7c" opacity="0.55"/><rect x="74" y="258" width="1" height="23" fill="#a89474" opacity="0.55"/><rect x="74" y="-2" width="1" height="23" fill="#a89474" opacity="0.55"/><rect x="51" y="159" width="1" height="24" fill="#a89474" opacity="0.55"/><rect x="56" y="135" width="1" height="16" fill="#e9dcc1" opacity="0.55"/><rect x="126" y="95" width="1" height="41" fill="#a89474" opacity="0.55"/><rect x="14" y="74" width="2" height="13" fill="#bca888" opacity="0.55"/><rect x="6" y="72" width="2" height="13" fill="#b09c7c" opacity="0.55"/><rect x="47" y="201" width="2" height="55" fill="#efe3ca" opacity="0.55"/><rect x="28" y="40" width="1" height="31" fill="#bca888" opacity="0.55"/><rect x="47" y="239" width="1" height="29" fill="#a89474" opacity="0.55"/><rect x="47" y="-21" width="1" height="29" fill="#a89474" opacity="0.55"/><rect x="95" y="169" width="2" height="20" fill="#b09c7c" opacity="0.55"/><rect x="0" y="40" width="1" height="15" fill="#efe3ca" opacity="0.55"/><rect x="107" y="63" width="1" height="34" fill="#efe3ca" opacity="0.55"/><rect x="79" y="221" width="1" height="13" fill="#a89474" opacity="0.55"/><rect x="50" y="190" width="2" height="22" fill="#efe3ca" opacity="0.55"/><rect x="93" y="242" width="1" height="50" fill="#a89474" opacity="0.55"/><rect x="93" y="-18" width="1" height="50" fill="#a89474" opacity="0.55"/><rect x="63" y="207" width="1" height="34" fill="#b09c7c" opacity="0.55"/><rect x="118" y="32" width="1" height="26" fill="#bca888" opacity="0.55"/><rect x="16" y="173" width="1" height="27" fill="#efe3ca" opacity="0.55"/><rect x="157" y="22" width="1" height="57" fill="#efe3ca" opacity="0.55"/><rect x="70" y="152" width="1" height="56" fill="#e9dcc1" opacity="0.55"/><rect x="16" y="12" width="1" height="16" fill="#a89474" opacity="0.55"/><rect x="119" y="197" width="1" height="37" fill="#a89474" opacity="0.55"/><rect x="33" y="254" width="1" height="10" fill="#efe3ca" opacity="0.55"/><rect x="33" y="-6" width="1" height="10" fill="#efe3ca" opacity="0.55"/><rect x="38" y="120" width="1" height="30" fill="#a89474" opacity="0.55"/><rect x="92" y="40" width="1" height="35" fill="#bca888" opacity="0.55"/><rect x="63" y="208" width="1" height="51" fill="#b09c7c" opacity="0.55"/><rect x="123" y="166" width="1" height="37" fill="#b09c7c" opacity="0.55"/><rect x="18" y="135" width="1" height="23" fill="#b09c7c" opacity="0.55"/><rect x="107" y="255" width="2" height="21" fill="#bca888" opacity="0.55"/><rect x="107" y="-5" width="2" height="21" fill="#bca888" opacity="0.55"/><rect x="34" y="213" width="2" height="49" fill="#bca888" opacity="0.55"/><rect x="34" y="-47" width="2" height="49" fill="#bca888" opacity="0.55"/><rect x="137" y="62" width="1" height="28" fill="#efe3ca" opacity="0.55"/><rect x="145" y="137" width="1" height="26" fill="#efe3ca" opacity="0.55"/><rect x="50" y="224" width="1" height="21" fill="#bca888" opacity="0.55"/><rect x="60" y="78" width="1" height="47" fill="#bca888" opacity="0.55"/><rect x="83" y="33" width="2" height="26" fill="#bca888" opacity="0.55"/><rect x="129" y="118" width="1" height="51" fill="#a89474" opacity="0.55"/><rect x="9" y="52" width="1" height="40" fill="#bca888" opacity="0.55"/><rect x="114" y="191" width="1" height="28" fill="#bca888" opacity="0.55"/><rect x="30" y="25" width="1" height="48" fill="#e9dcc1" opacity="0.55"/><rect x="49" y="38" width="1" height="42" fill="#bca888" opacity="0.55"/><rect x="114" y="133" width="1" height="16" fill="#e9dcc1" opacity="0.55"/><rect x="158" y="179" width="1" height="12" fill="#efe3ca" opacity="0.55"/><rect x="87" y="72" width="1" height="23" fill="#efe3ca" opacity="0.55"/><rect x="9" y="104" width="1" height="30" fill="#a89474" opacity="0.55"/><rect x="95" y="94" width="1" height="14" fill="#bca888" opacity="0.55"/><rect x="8" y="253" width="2" height="14" fill="#a89474" opacity="0.55"/><rect x="8" y="-7" width="2" height="14" fill="#a89474" opacity="0.55"/><rect x="25" y="202" width="1" height="50" fill="#e9dcc1" opacity="0.55"/><rect x="23" y="83" width="2" height="54" fill="#efe3ca" opacity="0.55"/><rect x="104" y="145" width="1" height="36" fill="#b09c7c" opacity="0.55"/><rect x="79" y="182" width="2" height="36" fill="#b09c7c" opacity="0.55"/><rect x="93" y="100" width="2" height="56" fill="#a89474" opacity="0.55"/><rect x="52" y="3" width="2" height="20" fill="#a89474" opacity="0.55"/><rect x="29" y="46" width="2" height="46" fill="#efe3ca" opacity="0.55"/><rect x="117" y="83" width="1" height="10" fill="#b09c7c" opacity="0.55"/><rect x="141" y="72" width="2" height="15" fill="#e9dcc1" opacity="0.55"/><rect x="159" y="189" width="1" height="19" fill="#efe3ca" opacity="0.55"/><rect x="72" y="82" width="1" height="14" fill="#b09c7c" opacity="0.55"/><rect x="98" y="251" width="1" height="29" fill="#bca888" opacity="0.55"/><rect x="98" y="-9" width="1" height="29" fill="#bca888" opacity="0.55"/><rect x="11" y="247" width="1" height="13" fill="#e9dcc1" opacity="0.55"/><rect x="99" y="44" width="1" height="50" fill="#bca888" opacity="0.55"/><rect x="158" y="207" width="1" height="40" fill="#bca888" opacity="0.55"/><rect x="144" y="111" width="1" height="35" fill="#e9dcc1" opacity="0.55"/><rect x="40" y="196" width="1" height="17" fill="#bca888" opacity="0.55"/><rect x="63" y="98" width="1" height="45" fill="#b09c7c" opacity="0.55"/><rect x="82" y="60" width="2" height="48" fill="#a89474" opacity="0.55"/><rect x="140" y="156" width="2" height="29" fill="#e9dcc1" opacity="0.55"/><rect x="63" y="217" width="2" height="52" fill="#efe3ca" opacity="0.55"/><rect x="63" y="-43" width="2" height="52" fill="#efe3ca" opacity="0.55"/><rect x="114" y="257" width="2" height="21" fill="#b09c7c" opacity="0.55"/><rect x="114" y="-3" width="2" height="21" fill="#b09c7c" opacity="0.55"/><rect x="0" y="250" width="2" height="25" fill="#a89474" opacity="0.55"/><rect x="0" y="-10" width="2" height="25" fill="#a89474" opacity="0.55"/><rect x="158" y="234" width="1" height="40" fill="#a89474" opacity="0.55"/><rect x="158" y="-26" width="1" height="40" fill="#a89474" opacity="0.55"/><rect x="27" y="34" width="1" height="32" fill="#a89474" opacity="0.55"/><rect x="93" y="46" width="2" height="42" fill="#e9dcc1" opacity="0.55"/><rect x="10" y="20" width="1" height="15" fill="#efe3ca" opacity="0.55"/><rect x="130" y="40" width="1" height="58" fill="#e9dcc1" opacity="0.55"/><rect x="96" y="69" width="1" height="14" fill="#e9dcc1" opacity="0.55"/><rect x="28" y="99" width="1" height="41" fill="#efe3ca" opacity="0.55"/><rect x="42" y="113" width="1" height="32" fill="#e9dcc1" opacity="0.55"/><rect x="64" y="81" width="1" height="49" fill="#efe3ca" opacity="0.55"/><rect x="116" y="73" width="1" height="42" fill="#a89474" opacity="0.55"/><rect x="53" y="134" width="1" height="30" fill="#efe3ca" opacity="0.55"/><rect x="9" y="101" width="1" height="35" fill="#bca888" opacity="0.55"/><rect x="71" y="167" width="2" height="20" fill="#efe3ca" opacity="0.55"/><rect x="29" y="24" width="1" height="38" fill="#e9dcc1" opacity="0.55"/><rect x="133" y="53" width="1" height="44" fill="#a89474" opacity="0.55"/><rect x="95" y="135" width="2" height="33" fill="#e9dcc1" opacity="0.55"/></pattern><pattern id="carpet" patternUnits="userSpaceOnUse" width="40" height="40"><rect width="40" height="40" fill="#8c3030"/><circle cx="9" cy="23" r="1.7" fill="#7a2626" opacity="0.5"/><circle cx="28" cy="14" r="1.4" fill="#822a2a" opacity="0.5"/><circle cx="3" cy="18" r="2.6" fill="#9a3a3a" opacity="0.5"/><circle cx="19" cy="40" r="2.9" fill="#822a2a" opacity="0.5"/><circle cx="20" cy="0" r="2.5" fill="#7a2626" opacity="0.5"/><circle cx="9" cy="18" r="2.2" fill="#9a3a3a" opacity="0.5"/><circle cx="26" cy="32" r="1.7" fill="#7a2626" opacity="0.5"/><circle cx="8" cy="31" r="1.5" fill="#822a2a" opacity="0.5"/><circle cx="2" cy="1" r="1.1" fill="#822a2a" opacity="0.5"/><circle cx="22" cy="19" r="1.2" fill="#9a3a3a" opacity="0.5"/><circle cx="34" cy="14" r="1.8" fill="#9a3a3a" opacity="0.5"/><circle cx="37" cy="8" r="1.4" fill="#822a2a" opacity="0.5"/><circle cx="30" cy="10" r="1.3" fill="#7a2626" opacity="0.5"/><circle cx="9" cy="28" r="1.2" fill="#822a2a" opacity="0.5"/><circle cx="9" cy="17" r="1.8" fill="#9a3a3a" opacity="0.5"/><circle cx="0" cy="3" r="2.3" fill="#822a2a" opacity="0.5"/><circle cx="22" cy="38" r="2.3" fill="#9a3a3a" opacity="0.5"/><circle cx="38" cy="33" r="2.5" fill="#7a2626" opacity="0.5"/><circle cx="10" cy="0" r="1.1" fill="#822a2a" opacity="0.5"/><circle cx="1" cy="25" r="1.4" fill="#7a2626" opacity="0.5"/><circle cx="3" cy="6" r="1.0" fill="#822a2a" opacity="0.5"/><circle cx="12" cy="9" r="1.8" fill="#822a2a" opacity="0.5"/><circle cx="38" cy="32" r="2.3" fill="#9a3a3a" opacity="0.5"/><circle cx="39" cy="11" r="2.0" fill="#7a2626" opacity="0.5"/><circle cx="19" cy="40" r="1.1" fill="#822a2a" opacity="0.5"/><circle cx="30" cy="34" r="1.0" fill="#9a3a3a" opacity="0.5"/><circle cx="29" cy="5" r="2.5" fill="#9a3a3a" opacity="0.5"/><circle cx="11" cy="14" r="3.0" fill="#9a3a3a" opacity="0.5"/><circle cx="14" cy="2" r="1.2" fill="#822a2a" opacity="0.5"/><circle cx="16" cy="3" r="1.5" fill="#822a2a" opacity="0.5"/><circle cx="27" cy="33" r="2.9" fill="#9a3a3a" opacity="0.5"/><circle cx="13" cy="5" r="2.8" fill="#7a2626" opacity="0.5"/><circle cx="10" cy="16" r="2.8" fill="#822a2a" opacity="0.5"/><circle cx="12" cy="10" r="2.5" fill="#9a3a3a" opacity="0.5"/><circle cx="12" cy="24" r="1.7" fill="#7a2626" opacity="0.5"/><circle cx="24" cy="40" r="2.8" fill="#822a2a" opacity="0.5"/><circle cx="34" cy="30" r="1.9" fill="#822a2a" opacity="0.5"/><circle cx="0" cy="1" r="1.9" fill="#822a2a" opacity="0.5"/><circle cx="14" cy="36" r="2.8" fill="#7a2626" opacity="0.5"/><circle cx="25" cy="39" r="2.2" fill="#822a2a" opacity="0.5"/><circle cx="10" cy="9" r="1.1" fill="#7a2626" opacity="0.5"/><circle cx="6" cy="39" r="2.9" fill="#9a3a3a" opacity="0.5"/><circle cx="9" cy="1" r="1.1" fill="#7a2626" opacity="0.5"/><circle cx="40" cy="2" r="2.4" fill="#822a2a" opacity="0.5"/><circle cx="2" cy="4" r="2.7" fill="#9a3a3a" opacity="0.5"/><circle cx="12" cy="34" r="2.8" fill="#7a2626" opacity="0.5"/><circle cx="24" cy="6" r="1.5" fill="#7a2626" opacity="0.5"/><circle cx="7" cy="2" r="1.1" fill="#822a2a" opacity="0.5"/><circle cx="5" cy="40" r="2.3" fill="#9a3a3a" opacity="0.5"/><circle cx="6" cy="8" r="1.2" fill="#822a2a" opacity="0.5"/><circle cx="13" cy="18" r="1.6" fill="#9a3a3a" opacity="0.5"/><circle cx="16" cy="1" r="1.7" fill="#9a3a3a" opacity="0.5"/><circle cx="3" cy="23" r="2.8" fill="#822a2a" opacity="0.5"/><circle cx="32" cy="30" r="2.7" fill="#822a2a" opacity="0.5"/><circle cx="1" cy="26" r="1.1" fill="#822a2a" opacity="0.5"/><circle cx="6" cy="22" r="1.9" fill="#7a2626" opacity="0.5"/><circle cx="34" cy="36" r="1.4" fill="#7a2626" opacity="0.5"/><circle cx="36" cy="18" r="1.3" fill="#7a2626" opacity="0.5"/><circle cx="33" cy="12" r="1.6" fill="#7a2626" opacity="0.5"/><circle cx="0" cy="22" r="2.0" fill="#9a3a3a" opacity="0.5"/></pattern><pattern id="hatch" patternUnits="userSpaceOnUse" width="8" height="8"><rect width="8" height="8" fill="#fff"/><path d="M0 0 L8 8 M8 0 L0 8" stroke="#666" stroke-width="1"/></pattern></defs>
<g><rect x="1400" y="327" width="507" height="744" fill="url(#wood)"/>
<rect x="1907" y="645" width="131" height="426" fill="url(#wood)"/>
<rect x="1921" y="327" width="115" height="307" fill="#fff"/>
<g fill="#d6d6d6"><rect x="1935.9" y="327" width="2" height="307"/><rect x="1969.2" y="327" width="2" height="307"/><rect x="2002.5" y="327" width="2" height="307"/><rect x="1921" y="336.7" width="115" height="2"/><rect x="1921" y="370.0" width="115" height="2"/><rect x="1921" y="403.3" width="115" height="2"/><rect x="1921" y="436.6" width="115" height="2"/><rect x="1921" y="469.9" width="115" height="2"/><rect x="1921" y="503.2" width="115" height="2"/><rect x="1921" y="536.5" width="115" height="2"/><rect x="1921" y="569.8" width="115" height="2"/><rect x="1921" y="603.1" width="115" height="2"/></g>
<rect x="1400" y="316.5" width="655" height="10.5" fill="#808080" stroke="#4a4a4a" stroke-width="1"/>
<rect x="1588" y="327" width="10" height="72" fill="#808080" stroke="#4a4a4a" stroke-width="1"/>
<rect x="1589" y="399" width="8" height="106" fill="#cdb898"/>
<rect x="1588" y="505" width="10" height="140" fill="#808080" stroke="#4a4a4a" stroke-width="1"/>
<rect x="1400" y="576" width="188" height="9" fill="#808080" stroke="#4a4a4a" stroke-width="1"/>
<rect x="1598" y="634" width="3" height="11" fill="#808080" stroke="#4a4a4a" stroke-width="1"/>
<rect x="1601" y="636" width="94" height="8" fill="#d8c6a6"/>
<rect x="1695" y="634" width="250" height="11" fill="#808080" stroke="#4a4a4a" stroke-width="1"/>
<rect x="1945" y="636" width="85" height="8" fill="#d8c6a6"/>
<rect x="2030" y="634" width="25" height="18" fill="#808080" stroke="#4a4a4a" stroke-width="1"/>
<rect x="1601" y="632" width="7" height="15" fill="#fff" stroke="#555" stroke-width="1"/>
<rect x="1688" y="632" width="7" height="15" fill="#fff" stroke="#555" stroke-width="1"/>
<rect x="1945" y="632" width="7" height="15" fill="#fff" stroke="#555" stroke-width="1"/>
<rect x="2028" y="632" width="7" height="15" fill="#fff" stroke="#555" stroke-width="1"/>
<path d="M1607 634 V553.5 A81 81 0 0 1 1688 634" fill="none" stroke="#505050" stroke-width="1.8"/>
<path d="M1949 634 V553.5 A81 81 0 0 1 2030 634" fill="none" stroke="#505050" stroke-width="1.8"/>
<rect x="1907" y="327" width="14" height="70" fill="#808080" stroke="#4a4a4a" stroke-width="1"/>
<rect x="1907" y="397" width="14" height="73" fill="#fff" stroke="#444" stroke-width="1"/>
<rect x="1911" y="402" width="6" height="63" fill="#eefafa" stroke="#333" stroke-width="1"/>
<rect x="1911" y="397" width="6" height="5" fill="#e8d8a8"/><rect x="1911" y="465" width="6" height="5" fill="#e8d8a8"/>
<rect x="1907" y="470" width="14" height="14" fill="#808080" stroke="#4a4a4a" stroke-width="1"/>
<rect x="1907" y="484" width="14" height="76" fill="#fff" stroke="#444" stroke-width="1"/>
<rect x="1911" y="489" width="6" height="66" fill="#eefafa" stroke="#333" stroke-width="1"/>
<rect x="1911" y="484" width="6" height="5" fill="#e8d8a8"/><rect x="1911" y="555" width="6" height="5" fill="#e8d8a8"/>
<rect x="1907" y="560" width="14" height="74" fill="#808080" stroke="#4a4a4a" stroke-width="1"/>
<rect x="2036" y="317" width="10" height="320" fill="#000"/>
<rect x="2040" y="320" width="1.5" height="314" fill="#fff"/>
<rect x="2046" y="317" width="9.5" height="320" fill="url(#hatch)" stroke="#555" stroke-width="1"/>
<rect x="2039" y="652" width="16.5" height="382" fill="#fff"/>
<path d="M2039.5 652 V1034 M2045 652 V1034 M2049 652 V1034 M2055 652 V1034" stroke="#383838" stroke-width="1.6"/>
<rect x="2038" y="722.5" width="18" height="14" fill="#808080" stroke="#4a4a4a" stroke-width="1"/>
<rect x="2038" y="938" width="18" height="16" fill="#808080" stroke="#4a4a4a" stroke-width="1"/>
<rect x="2038" y="1026" width="18" height="8" fill="#808080" stroke="#4a4a4a" stroke-width="1"/>
<rect x="2039" y="1034" width="31" height="47" fill="#808080" stroke="#4a4a4a" stroke-width="1"/>
<rect x="1400" y="1070.5" width="670" height="10.5" fill="#808080" stroke="#4a4a4a" stroke-width="1"/>
<rect x="1546.5" y="1064.5" width="93" height="5" rx="2" fill="#3a2a20" stroke="#111" stroke-width="1"/>
<rect x="1771" y="1064.5" width="161" height="6" rx="2" fill="#3a2a20" stroke="#111" stroke-width="1"/>
<rect x="1400" y="327" width="187" height="66" fill="#f3ebcb" stroke="#000" stroke-width="2"/>
<rect x="1400" y="393" width="187" height="5" fill="#7a4a1e" stroke="#000" stroke-width="1.5"/>
<rect x="1400" y="505" width="187" height="4.5" fill="#7a4a1e" stroke="#000" stroke-width="1.5"/>
<rect x="1400" y="509.5" width="187" height="66" fill="#f3ebcb" stroke="#000" stroke-width="2"/>
<rect x="1400" y="585" width="187" height="60" fill="#9a4a0a" stroke="#000" stroke-width="2"/>
<rect x="1514.5" y="590" width="21" height="8.5" fill="#ccc" stroke="#111" stroke-width="1.5"/>
<rect x="1492.5" y="598.5" width="65" height="13" fill="#c8c8c8" stroke="#111" stroke-width="2"/>
<rect x="1496" y="624" width="49.5" height="17.5" rx="2" fill="#c8c8c8" stroke="#111" stroke-width="2.5"/>
<path d="M1499 646 H1546 L1544 672 H1502 Z" fill="#5e5e5e" stroke="#111" stroke-width="1.5"/>
<rect x="1526" y="672" width="4" height="5" fill="#444"/>
<path d="M1504 677 L1546 675 L1547.5 684 L1504 686 Z" fill="#5e5e5e" stroke="#111" stroke-width="1.5"/>
<rect x="1620.5" y="329" width="56" height="40.5" fill="#6b4423" stroke="#000" stroke-width="2"/>
<ellipse cx="1648.0" cy="343" rx="5" ry="6" fill="#fff" stroke="#000" stroke-width="1.5"/>
<circle cx="1648.0" cy="355" r="6.5" fill="#fff" stroke="#000" stroke-width="1.5"/>
<rect x="1646.5" y="330" width="3" height="19" fill="#000"/>
<rect x="1838.5" y="329" width="56" height="40.5" fill="#6b4423" stroke="#000" stroke-width="2"/>
<ellipse cx="1866.0" cy="343" rx="5" ry="6" fill="#fff" stroke="#000" stroke-width="1.5"/>
<circle cx="1866.0" cy="355" r="6.5" fill="#fff" stroke="#000" stroke-width="1.5"/>
<rect x="1864.5" y="330" width="3" height="19" fill="#000"/>
<rect x="1677" y="328" width="160" height="5" fill="#7a4a1e" stroke="#000" stroke-width="1.5"/>
<rect x="1677" y="333" width="160" height="201" fill="#fff" stroke="#000" stroke-width="2"/>
<rect x="1677" y="534" width="160" height="4.5" fill="#7a4a1e" stroke="#000" stroke-width="1.5"/>
<rect x="1687" y="335.5" width="66" height="45" rx="4" fill="#fff" stroke="#000" stroke-width="2"/>
<rect x="1763" y="335.5" width="65" height="46" rx="4" fill="#fff" stroke="#000" stroke-width="2"/>
<path d="M1756 389 H1837 M1756 395 H1837 M1730.5 406.5 H1837" stroke="#000" stroke-width="2"/>
<path d="M1678 405.5 L1756.5 388.5 L1697 426 L1678 407.5" fill="#fff" stroke="#000" stroke-width="2" stroke-linejoin="miter"/>
<g transform="translate(1967 365) rotate(-31)"><rect x="-30" y="-24" width="60" height="48" rx="3" fill="#fff" stroke="#000" stroke-width="2"/><rect x="-24" y="-16" width="49" height="40" rx="3" fill="#fff" stroke="#000" stroke-width="2"/></g>
<rect x="1744.5" y="647" width="177" height="46" fill="#9a4a0a" stroke="#000" stroke-width="2"/>
<path d="M1810 672 Q1812 652 1835.5 652 Q1859 652 1861 672 V676 Q1859 683 1835.5 683 Q1812 683 1810 676 Z" fill="#2a2a2a" stroke="#000" stroke-width="1"/>
<rect x="1826.5" y="656" width="18" height="15" fill="#3a3a3a" stroke="#000" stroke-width="1"/>
<rect x="1802" y="669" width="70" height="4" fill="#222"/>
<rect x="1784" y="672.5" width="104" height="7.5" rx="1.5" fill="#2a2a2a" stroke="#000" stroke-width="1"/>
<rect x="1518.5" y="894.5" width="27.0" height="39" fill="#707070" stroke="#000" stroke-width="2"/>
<rect x="1522.2" y="966.0" width="23.3" height="39" fill="#707070" stroke="#000" stroke-width="2"/>
<rect x="1634" y="894.5" width="19.5" height="39" fill="#707070" stroke="#000" stroke-width="2"/>
<rect x="1634" y="966" width="23" height="39" fill="#707070" stroke="#000" stroke-width="2"/>
<rect x="1544.5" y="856.5" width="91" height="180" fill="#9a4a0a" stroke="#000" stroke-width="2"/>
<circle cx="1566.0" cy="907.5" r="12.5" fill="#fff" stroke="#000" stroke-width="1.5"/>
<circle cx="1566.0" cy="907.5" r="9" fill="#fff" stroke="#000" stroke-width="1.5"/>
<circle cx="1616.0" cy="909.5" r="12.5" fill="#fff" stroke="#000" stroke-width="1.5"/>
<circle cx="1616.0" cy="909.5" r="9" fill="#fff" stroke="#000" stroke-width="1.5"/>
<circle cx="1606.0" cy="885.5" r="5" fill="#fff" stroke="#000" stroke-width="2"/>
<circle cx="1570.0" cy="931.5" r="5" fill="#fff" stroke="#000" stroke-width="2"/>
<circle cx="1598" cy="898" r="1.5" fill="#000"/>
<rect x="1736.5" y="742.5" width="257" height="269" fill="url(#carpet)" stroke="#000" stroke-width="2"/>
<rect x="1788.5" y="842.5" width="125" height="77" fill="#c5b096" stroke="#000" stroke-width="2"/>
<rect x="1799" y="844" width="104" height="5" fill="#c7b6b6"/><rect x="1799" y="913" width="104" height="5" fill="#c7b6b6"/>
<rect x="1799" y="849" width="104" height="3" fill="#000"/><rect x="1799" y="910" width="104" height="3" fill="#000"/>
<rect x="1799" y="852" width="104" height="1.5" fill="#8fb0b8"/><rect x="1799" y="908.5" width="104" height="1.5" fill="#8fb0b8"/>
<rect x="1789" y="843" width="10" height="76" fill="#9a4a0a" stroke="#000" stroke-width="1.5"/>
<rect x="1903" y="843" width="10" height="76" fill="#9a4a0a" stroke="#000" stroke-width="1.5"/>
<rect x="1951" y="786.5" width="84.5" height="177" fill="#f1f1e0" stroke="#000" stroke-width="2"/>
<rect x="1951" y="797" width="73" height="156" fill="#f1f1e0" stroke="none"/>
<path d="M1951 797 H2024.5 V953 H1951" fill="none" stroke="#000" stroke-width="1.5"/>
<rect x="1949" y="799.5" width="75" height="75" rx="5" fill="#f1f1e0" stroke="#000" stroke-width="2"/>
<rect x="1949" y="874.5" width="75" height="78" rx="5" fill="#f1f1e0" stroke="#000" stroke-width="2"/>
<rect x="1775.0" y="971.5" width="78.5" height="84" fill="#f1f1e0" stroke="#000" stroke-width="2"/>
<path d="M1785.0 971.5 V1046 H1843.5 V971.5" fill="none" stroke="#000" stroke-width="1.5"/>
<rect x="1785.0" y="971.5" width="58.5" height="75" rx="5" fill="#f1f1e0" stroke="#000" stroke-width="2"/>
<rect x="1864.5" y="971.5" width="78.5" height="84" fill="#f1f1e0" stroke="#000" stroke-width="2"/>
<path d="M1874.5 971.5 V1046 H1933.0 V971.5" fill="none" stroke="#000" stroke-width="1.5"/>
<rect x="1874.5" y="971.5" width="58.5" height="75" rx="5" fill="#f1f1e0" stroke="#000" stroke-width="2"/>
<rect x="2027" y="1031" width="10" height="36" fill="#e0962e" stroke="#000" stroke-width="1.5"/>
<rect x="2025" y="1046" width="5" height="5" fill="#000"/></g>
</svg>
<div style="position:absolute;left:706.0px;top:82.0px;width:782.0px;height:1097.0px;background:#f0f0f0;border:1px solid #555;outline:1px solid rgba(80,80,80,0.45);box-sizing:border-box;box-shadow:0 4px 14px 2px rgba(0,0,0,0.28)"></div>
<div style="position:absolute;left:707.0px;top:83.0px;width:780.0px;height:57.0px;background:#fff"></div>
<svg style="left:720px;top:92px" width="40" height="40" viewBox="0 0 40 40">
<g transform="translate(25 12.5) rotate(45)">
<path d="M-2.6 -6.4 V-2.2 A2.6 2.6 0 0 0 2.6 -2.2 V-6.4 A7 7 0 0 1 2.6 6.2 V20.5 A2.6 2.6 0 0 1 -2.6 20.5 V6.2 A7 7 0 0 1 -2.6 -6.4 Z" fill="#fff" stroke="#a0a0a0" stroke-width="1.8" stroke-linejoin="round"/>
</g></svg>
<div class="t" style="left:758.40px;top:101.00px;font-size:24.40px;line-height:24.40px;transform:scaleX(0.9909);transform-origin:0 0;color:#000;">Door - Object Properties</div>
<svg style="left:1440px;top:98px" width="26" height="26" viewBox="0 0 26 26">
<path d="M3.5 3.5 L22.5 22.5 M22.5 3.5 L3.5 22.5" stroke="#000" stroke-width="2"/></svg>
<div style="position:absolute;left:730.5px;top:208.0px;width:731.0px;height:886.5px;background:#fff;border:1px solid #d9d9d9;box-sizing:border-box"></div>
<div style="position:absolute;left:889.0px;top:166.5px;width:163.0px;height:42.5px;background:#f0f0f0;border:1px solid #d9d9d9;border-bottom:none;box-sizing:border-box"></div>
<div style="position:absolute;left:730.5px;top:162.5px;width:159.0px;height:48.0px;background:#fff;border:1px solid #d9d9d9;border-bottom:none;box-sizing:border-box"></div>
<div class="t" style="left:754.00px;top:176.00px;font-size:24.40px;line-height:24.40px;transform:scaleX(0.9712);transform-origin:0 0;color:#000;">Properties</div>
<div class="t" style="left:911.00px;top:178.00px;font-size:24.40px;line-height:24.40px;transform:scaleX(0.9836);transform-origin:0 0;color:#000;">Description</div>
<div class="t" style="left:752.00px;top:244.00px;font-size:24.40px;line-height:24.40px;transform:scaleX(0.9670);transform-origin:0 0;color:#000;">Caption:</div>
<div style="position:absolute;left:880.5px;top:232.0px;width:265.0px;height:43.5px;background:#fff;border:1px solid #7a7a7a;box-sizing:border-box"></div>
<div class="t" style="left:886.00px;top:244.00px;font-size:24.40px;line-height:24.40px;transform:scaleX(1.0102);transform-origin:0 0;color:#000;">Hall door</div>
<div style="position:absolute;left:1159.0px;top:231.5px;width:278.0px;height:45.0px;background:#e1e1e1;border:1px solid #adadad;box-sizing:border-box"></div>
<div class="t" style="left:1219.40px;top:244.00px;font-size:24.40px;line-height:24.40px;transform:scaleX(0.9573);transform-origin:0 0;color:#000;">Save to Library</div>
<div class="t" style="left:752.00px;top:302.00px;font-size:24.40px;line-height:24.40px;transform:scaleX(1.0116);transform-origin:0 0;color:#000;">Width:</div>
<div style="position:absolute;left:880.5px;top:290.0px;width:139.5px;height:43.5px;background:#fff;border:1px solid #0078d7;box-sizing:border-box"></div>
<div class="t" style="left:886.00px;top:302.00px;font-size:24.40px;line-height:24.40px;color:#000;">90</div>
<div class="t" style="left:1031.80px;top:302.00px;font-size:24.40px;line-height:24.40px;transform:scaleX(0.9576);transform-origin:0 0;color:#000;">cm</div>
<div class="t" style="left:752.00px;top:358.00px;font-size:24.40px;line-height:24.40px;transform:scaleX(0.9085);transform-origin:0 0;color:#000;">Thickness:</div>
<div style="position:absolute;left:880.5px;top:346.0px;width:139.5px;height:43.5px;background:#fff;border:1px solid #7a7a7a;box-sizing:border-box"></div>
<div class="t" style="left:886.00px;top:358.00px;font-size:24.40px;line-height:24.40px;color:#000;">3</div>
<div class="t" style="left:1031.80px;top:358.00px;font-size:24.40px;line-height:24.40px;transform:scaleX(0.9576);transform-origin:0 0;color:#000;">cm</div>
<div class="t" style="left:752.00px;top:414.00px;font-size:24.40px;line-height:24.40px;transform:scaleX(0.9655);transform-origin:0 0;color:#000;">Position</div>
<div style="position:absolute;left:880.5px;top:402.0px;width:139.5px;height:43.5px;background:#fff;border:1px solid #7a7a7a;box-sizing:border-box"></div>
<div class="t" style="left:886.00px;top:414.00px;font-size:24.40px;line-height:24.40px;color:#000;">90</div>
<div class="t" style="left:1031.80px;top:414.00px;font-size:24.40px;line-height:24.40px;transform:scaleX(0.9576);transform-origin:0 0;color:#000;">cm</div>
<div style="position:absolute;left:880.5px;top:458.0px;width:139.5px;height:43.5px;background:#fff;border:1px solid #7a7a7a;box-sizing:border-box"></div>
<div class="t" style="left:886.00px;top:470.00px;font-size:24.40px;line-height:24.40px;color:#000;">288</div>
<div class="t" style="left:1031.80px;top:470.00px;font-size:24.40px;line-height:24.40px;transform:scaleX(0.9576);transform-origin:0 0;color:#000;">cm</div>
<div class="t" style="left:752.00px;top:526.00px;font-size:24.40px;line-height:24.40px;transform:scaleX(0.9735);transform-origin:0 0;color:#000;">Rotation:</div>
<div style="position:absolute;left:880.5px;top:514.0px;width:139.5px;height:43.5px;background:#fff;border:1px solid #7a7a7a;box-sizing:border-box"></div>
<div class="t" style="left:886.00px;top:526.00px;font-size:24.40px;line-height:24.40px;color:#000;">90</div>
<div class="t" style="left:850.30px;top:414.00px;font-size:24.40px;line-height:24.40px;transform:scaleX(0.9421);transform-origin:0 0;color:#000;">x:</div>
<div class="t" style="left:850.30px;top:470.00px;font-size:24.40px;line-height:24.40px;transform:scaleX(0.9421);transform-origin:0 0;color:#000;">y:</div>
<svg style="left:1031px;top:527px" width="12" height="12"><circle cx="5.5" cy="5.5" r="2.8" fill="none" stroke="#000" stroke-width="1.6"/></svg>
<svg style="left:991px;top:299px" width="24" height="28" viewBox="0 0 24 28">
<rect x="1.5" y="1.5" width="21" height="25" rx="3" fill="#8aa6e0" stroke="#4f5f8f" stroke-width="1.6"/>
<rect x="4.5" y="4" width="15" height="4" fill="#4f5f8f"/>
<g fill="#dfe8fb">
<rect x="4.5" y="10" width="3.5" height="3"/><rect x="10.25" y="10" width="3.5" height="3"/><rect x="16" y="10" width="3.5" height="3"/>
<rect x="4.5" y="15" width="3.5" height="3"/><rect x="10.25" y="15" width="3.5" height="3"/><rect x="16" y="15" width="3.5" height="3"/>
<rect x="4.5" y="20" width="3.5" height="3"/><rect x="10.25" y="20" width="3.5" height="3"/><rect x="16" y="20" width="3.5" height="3"/>
</g></svg>
<div style="position:absolute;left:1158.5px;top:290.5px;width:278.0px;height:265.0px;background:linear-gradient(#ffffff 0%,#fbfbfb 25%,#e2e2e2 100%);border:2px solid #a8a8a8;box-sizing:border-box"></div>
<svg style="left:1230px;top:300px" width="140" height="250" viewBox="1230 300 140 250">
<rect x="1239" y="307.5" width="120" height="235.5" fill="#6e3f16" stroke="#000" stroke-width="2.2"/>
<path d="M1247 543 V315.5 H1351.5 V543" fill="none" stroke="#000" stroke-width="1.8"/>
<rect x="1309" y="327" width="22.5" height="204" fill="#f2ffff" stroke="#000" stroke-width="1.8"/>
<path d="M1332 435 H1343" stroke="#000" stroke-width="1.5"/>
<rect x="1338" y="428" width="7.5" height="23.5" fill="#c8c8c8" stroke="#888" stroke-width="1.3"/>
</svg>
<div style="position:absolute;left:752.0px;top:586.0px;width:394.0px;height:154.5px;border:1px solid #dcdcdc;box-sizing:border-box"></div>
<div style="position:absolute;left:768.0px;top:575.0px;width:38.0px;height:22.0px;background:#fff"></div>
<div class="t" style="left:771.80px;top:575.50px;font-size:24.40px;line-height:24.40px;transform:scaleX(0.9613);transform-origin:0 0;color:#000;">3D</div>
<div class="t" style="left:772.40px;top:635.00px;font-size:24.40px;line-height:24.40px;transform:scaleX(0.9598);transform-origin:0 0;color:#000;">Position</div>
<div class="t" style="left:870.60px;top:635.00px;font-size:24.40px;line-height:24.40px;transform:scaleX(0.9421);transform-origin:0 0;color:#000;">z:</div>
<div style="position:absolute;left:900.0px;top:622.0px;width:140.0px;height:44.0px;background:#fff;border:1px solid #7a7a7a;box-sizing:border-box"></div>
<div class="t" style="left:905.00px;top:635.00px;font-size:24.40px;line-height:24.40px;color:#000;">0</div>
<div class="t" style="left:1051.50px;top:635.00px;font-size:24.40px;line-height:24.40px;transform:scaleX(0.9636);transform-origin:0 0;color:#000;">cm</div>
<div class="t" style="left:772.00px;top:690.50px;font-size:24.40px;line-height:24.40px;transform:scaleX(1.0039);transform-origin:0 0;color:#000;">Height:</div>
<div style="position:absolute;left:900.0px;top:678.0px;width:140.0px;height:44.0px;background:#fff;border:1px solid #7a7a7a;box-sizing:border-box"></div>
<div class="t" style="left:905.00px;top:690.50px;font-size:24.40px;line-height:24.40px;color:#000;">197</div>
<div class="t" style="left:1051.50px;top:690.50px;font-size:24.40px;line-height:24.40px;transform:scaleX(0.9636);transform-origin:0 0;color:#000;">cm</div>
<div class="t" style="left:1158.30px;top:582.00px;font-size:24.40px;line-height:24.40px;transform:scaleX(0.9611);transform-origin:0 0;color:#000;">Appearance: 9/20</div>
<div class="t" style="left:1158.30px;top:638.00px;font-size:24.40px;line-height:24.40px;transform:scaleX(0.9831);transform-origin:0 0;color:#000;">Handle type: 2/9</div>
<div style="position:absolute;left:1397.0px;top:571.0px;width:40.0px;height:42.0px;background:#e1e1e1;border:1px solid #adadad;box-sizing:border-box"></div>
<div style="position:absolute;left:1397.0px;top:627.0px;width:40.0px;height:42.0px;background:#e1e1e1;border:1px solid #adadad;box-sizing:border-box"></div>
<svg style="left:1397px;top:571px" width="40" height="100"><g fill="#000"><rect x="13" y="29" width="2.5" height="2.5"/><rect x="18.5" y="29" width="2.5" height="2.5"/><rect x="24" y="29" width="2.5" height="2.5"/><rect x="13" y="85" width="2.5" height="2.5"/><rect x="18.5" y="85" width="2.5" height="2.5"/><rect x="24" y="85" width="2.5" height="2.5"/></g></svg>
<svg style="left:1164.0px;top:694.5px" width="14" height="14" viewBox="0 0 14 14"><rect x="0.75" y="0.75" width="12" height="12" fill="#fff" stroke="#333" stroke-width="1.4"/><path d="M3 6.5 L5.5 9 L10.5 3.5" fill="none" stroke="#555" stroke-width="1.3"/></svg>
<div class="t" style="left:1194.00px;top:692.00px;font-size:24.40px;line-height:24.40px;transform:scaleX(0.9677);transform-origin:0 0;color:#000;">Snap to wall</div>
<svg style="left:1164.0px;top:746.0px" width="14" height="14" viewBox="0 0 14 14"><rect x="0.75" y="0.75" width="12" height="12" fill="#fff" stroke="#333" stroke-width="1.4"/></svg>
<div class="t" style="left:1194.00px;top:743.50px;font-size:24.40px;line-height:24.40px;transform:scaleX(0.9678);transform-origin:0 0;color:#000;">Opened</div>
<div style="position:absolute;left:752.0px;top:804.0px;width:686.0px;height:264.5px;border:1px solid #dcdcdc;box-sizing:border-box"></div>
<div style="position:absolute;left:766.0px;top:792.0px;width:78.0px;height:24.0px;background:#fff"></div>
<div class="t" style="left:771.20px;top:794.00px;font-size:24.40px;line-height:24.40px;transform:scaleX(0.9657);transform-origin:0 0;color:#000;">Colors</div>
<svg style="left:777.5px;top:852.0px" width="14" height="14" viewBox="0 0 14 14"><rect x="0.75" y="0.75" width="12" height="12" fill="#fff" stroke="#333" stroke-width="1.4"/><path d="M3 6.5 L5.5 9 L10.5 3.5" fill="none" stroke="#555" stroke-width="1.3"/></svg>
<div class="t" style="left:808.20px;top:850.00px;font-size:24.40px;line-height:24.40px;transform:scaleX(0.9151);transform-origin:0 0;color:#000;">Line:</div>
<svg style="left:777.5px;top:934.0px" width="14" height="14" viewBox="0 0 14 14"><rect x="0.75" y="0.75" width="12" height="12" fill="#fff" stroke="#333" stroke-width="1.4"/><path d="M3 6.5 L5.5 9 L10.5 3.5" fill="none" stroke="#555" stroke-width="1.3"/></svg>
<div class="t" style="left:808.20px;top:932.00px;font-size:24.40px;line-height:24.40px;transform:scaleX(0.9158);transform-origin:0 0;color:#000;">Fill:</div>
<div style="position:absolute;left:982.5px;top:842.5px;width:99.0px;height:32.5px;background:#fff;border:2px solid #acacac;box-sizing:border-box"></div>
<div style="position:absolute;left:987.0px;top:857.0px;width:90.0px;height:3.5px;background:#555"></div>
<div style="position:absolute;left:982.5px;top:892.0px;width:99.0px;height:99.5px;background:#fff;border:2px solid #acacac;box-sizing:border-box"></div>
<div style="position:absolute;left:987.5px;top:897.5px;width:89.0px;height:89.0px;background:#6b3d15"></div>
<svg style="left:1100.0px;top:852.0px" width="14" height="14" viewBox="0 0 14 14"><rect x="0.75" y="0.75" width="12" height="12" fill="#fff" stroke="#333" stroke-width="1.4"/><path d="M3 6.5 L5.5 9 L10.5 3.5" fill="none" stroke="#555" stroke-width="1.3"/></svg>
<div class="t" style="left:1130.00px;top:850.00px;font-size:24.40px;line-height:24.40px;transform:scaleX(0.9670);transform-origin:0 0;color:#000;">Caption:</div>
<div style="position:absolute;left:1318.5px;top:843.0px;width:99.5px;height:32.5px;background:#fff;border:2px solid #acacac;box-sizing:border-box"></div>
<div style="position:absolute;left:1324.0px;top:848.0px;width:88.0px;height:22.0px;background:#000"></div>
<svg style="left:1100.0px;top:906.0px" width="14" height="14" viewBox="0 0 14 14"><rect x="0.75" y="0.75" width="12" height="12" fill="#fff" stroke="#333" stroke-width="1.4"/><path d="M3 6.5 L5.5 9 L10.5 3.5" fill="none" stroke="#555" stroke-width="1.3"/></svg>
<div class="t" style="left:1130.00px;top:904.00px;font-size:24.40px;line-height:24.40px;transform:scaleX(0.9885);transform-origin:0 0;color:#000;">Doorframe:</div>
<div style="position:absolute;left:1274.0px;top:892.5px;width:100.0px;height:43.0px;background:#fff;border:1px solid #7a7a7a;box-sizing:border-box"></div>
<div class="t" style="left:1280.00px;top:904.00px;font-size:24.40px;line-height:24.40px;color:#000;">7</div>
<div class="t" style="left:1386.00px;top:904.00px;font-size:24.40px;line-height:24.40px;transform:scaleX(0.9636);transform-origin:0 0;color:#000;">cm</div>
<svg style="left:1100.0px;top:990.0px" width="14" height="14" viewBox="0 0 14 14"><rect x="0.75" y="0.75" width="12" height="12" fill="#fff" stroke="#333" stroke-width="1.4"/></svg>
<div class="t" style="left:1130.00px;top:988.00px;font-size:24.40px;line-height:24.40px;transform:scaleX(0.9578);transform-origin:0 0;color:#000;">Front:</div>
<div style="position:absolute;left:1318.5px;top:948.5px;width:99.5px;height:99.0px;background:#fff;border:2px solid #acacac;box-sizing:border-box"></div>
<div style="position:absolute;left:1324.0px;top:954.0px;width:88.0px;height:88.0px;background:#6b3d15"></div>
<div style="position:absolute;left:731.0px;top:1109.0px;width:148.0px;height:45.5px;background:#e1e1e1;border:1px solid #adadad;box-sizing:border-box"></div>
<div class="t" style="left:743.80px;top:1122.00px;font-size:24.40px;line-height:24.40px;transform:scaleX(0.9408);transform-origin:0 0;color:#000;">More... (3D)</div>
<div style="position:absolute;left:1153.0px;top:1109.0px;width:148.0px;height:45.5px;background:#e1e1e1;border:2px solid #0078d7;box-sizing:border-box"></div>
<div class="t" style="left:1210.70px;top:1122.00px;font-size:24.40px;line-height:24.40px;transform:scaleX(0.9314);transform-origin:0 0;color:#000;">OK</div>
<div style="position:absolute;left:1315.0px;top:1109.0px;width:148.0px;height:45.5px;background:#e1e1e1;border:1px solid #adadad;box-sizing:border-box"></div>
<div class="t" style="left:1353.30px;top:1122.00px;font-size:24.40px;line-height:24.40px;transform:scaleX(0.9276);transform-origin:0 0;color:#000;">Cancel</div>
</body></html>
